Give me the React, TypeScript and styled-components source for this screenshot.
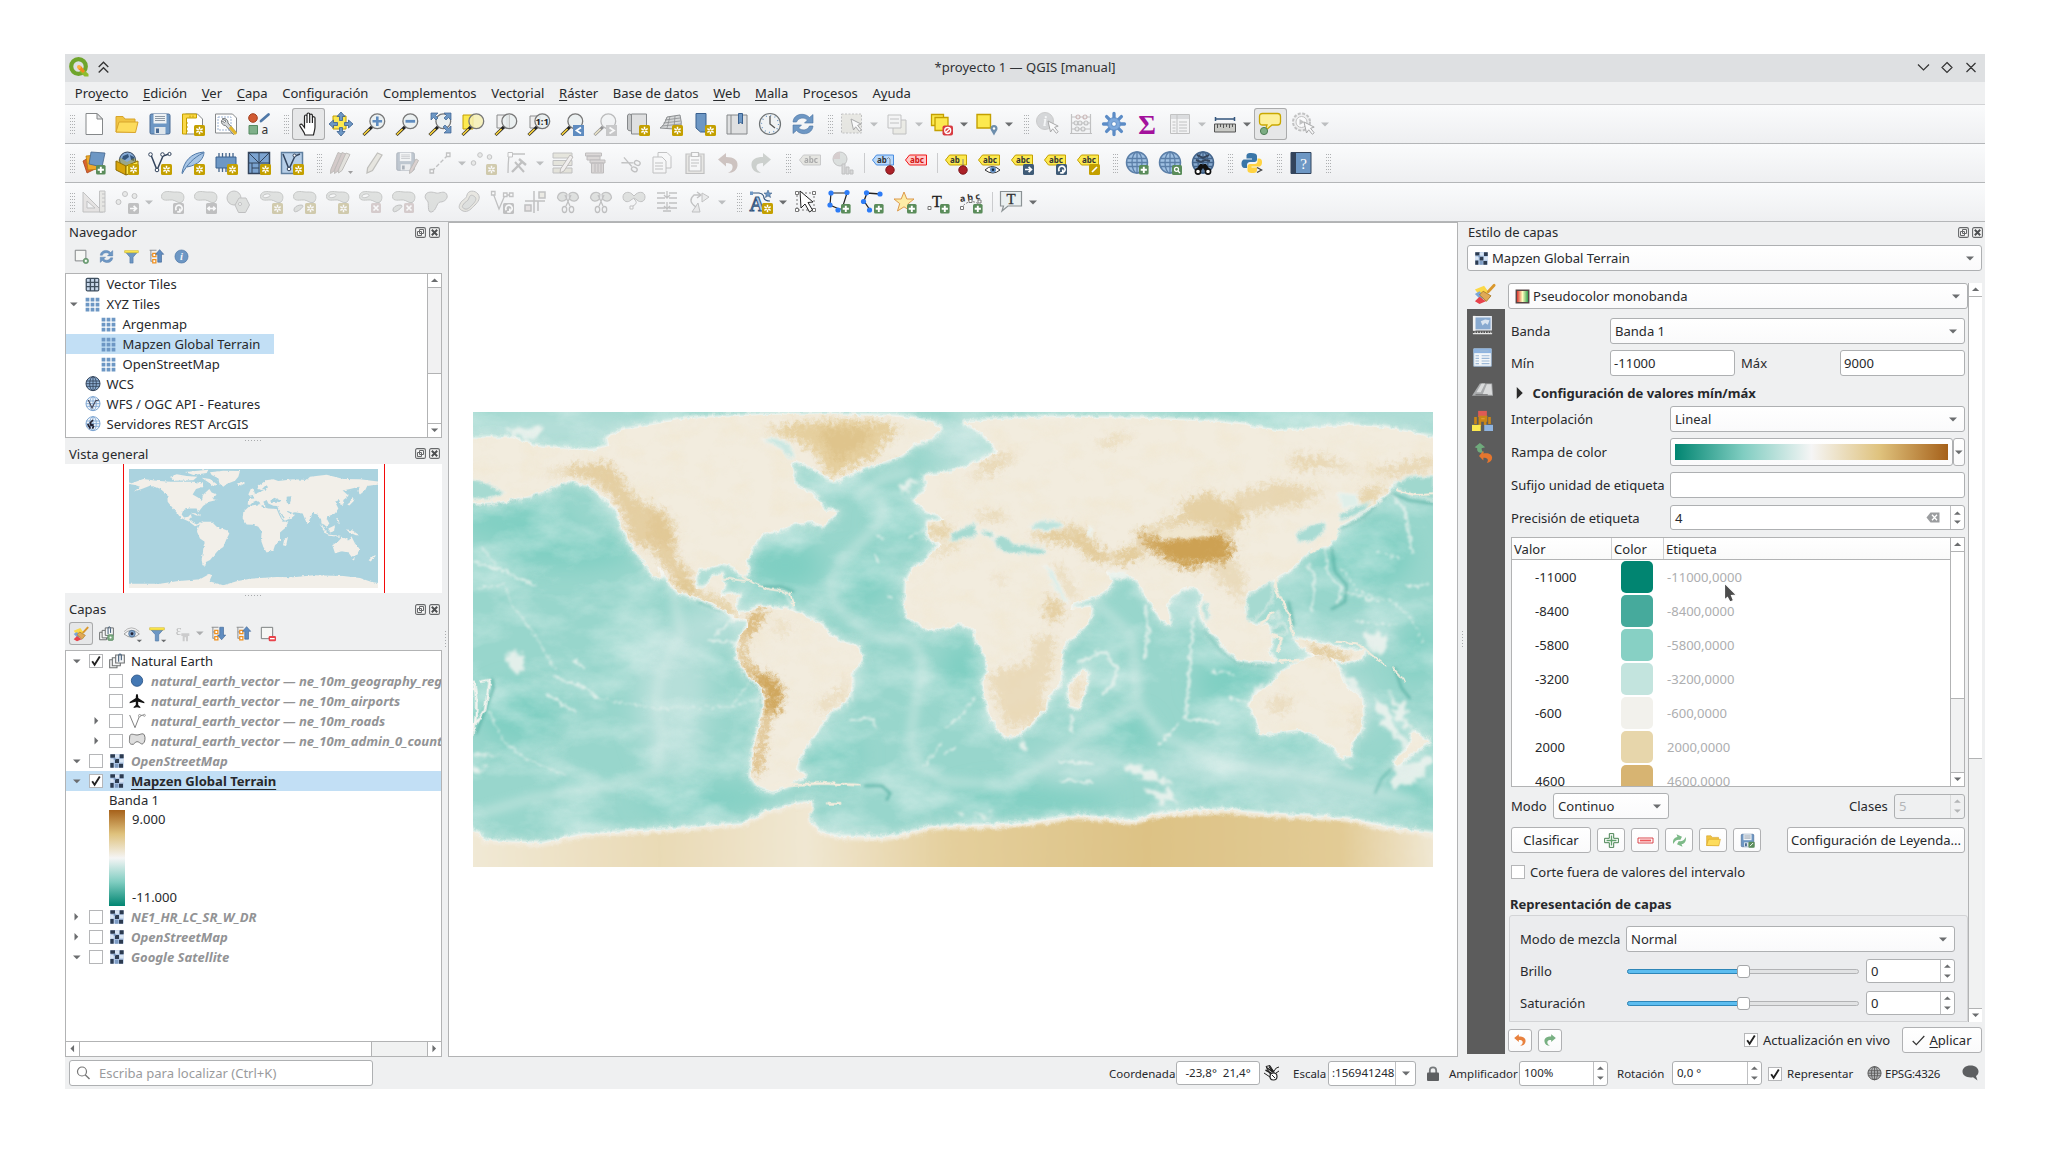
import React from "react";
import styled, { createGlobalStyle, css } from "styled-components";

const LINE = "#b2b3b4";
const RAMP = "#018571, #80cdc1 25%, #f5f5f5 50%, #dfc27d 75%, #a6611a";

const GlobalStyle = createGlobalStyle`
  body {
    margin: 0;
    background: #fff;
    font-family: "Noto Sans", "Open Sans", sans-serif;
    font-size: 13.05px;
    line-height: 20px;
    color: #27292c;
  }
  * { box-sizing: border-box; }
  svg { display: block; flex: none; overflow: visible; }
  u { text-underline-offset: 2px; text-decoration-thickness: 1px; text-decoration-skip-ink: none; }
`;

/* ------------------------------------------------------------------ window */

const Window = styled.div`
  margin: 54px 0 77px 65px;
  width: 1920px;
  height: 1035px;
  background: #eff0f1;
  display: flex;
  flex-direction: column;
  white-space: nowrap;
`;

const TitleBar = styled.div`
  height: 28px;
  background: #dee0e2;
  display: grid;
  grid-template-columns: 200px 1fr 200px;
  align-items: center;
`;
const TitleSide = styled.div<{ $end?: boolean }>`
  display: flex;
  align-items: center;
  gap: 9px;
  padding: ${(p) => (p.$end ? "0 6px 2px 0" : "0 0 2px 4px")};
  justify-content: ${(p) => (p.$end ? "flex-end" : "flex-start")};
`;
const TitleText = styled.div`
  text-align: center;
  padding-bottom: 3px;
  color: #2f3235;
`;

const MenuBar = styled.div`
  height: 23px;
  display: flex;
  padding: 1px 0 0 2.5px;
  border-bottom: 1px solid #d2d3d5;
`;
const MenuItem = styled.span`
  padding: 0 7.3px;
`;

const Bar = styled.div<{ $h: number }>`
  height: ${(p) => p.$h}px;
  display: flex;
  align-items: center;
  background: linear-gradient(#fafbfc, #eeeff1);
  border-bottom: 1px solid #b4b6b8;
`;
const Tool = styled.div<{ $on?: boolean; $off?: boolean }>`
  width: 33px;
  height: 32px;
  display: flex;
  align-items: center;
  justify-content: center;
  ${(p) =>
    p.$on &&
    css`
      background: #e6e7e8;
      box-shadow: inset 0 0 0 1px #aaabac;
      border-radius: 3px;
    `}
  ${(p) => p.$off && css`opacity: 0.47; filter: grayscale(0.6);`}
`;
const DropSlot = styled.div<{ $off?: boolean }>`
  width: 12px;
  padding-right: 1px;
  display: flex;
  justify-content: center;
  opacity: ${(p) => (p.$off ? 0.4 : 1)};
`;
const Grip = styled.div<{ $first?: boolean }>`
  width: ${(p) => (p.$first ? 12.5 : 16)}px;
  height: 19px;
  padding-left: ${(p) => (p.$first ? 5 : 8.5)}px;
  &::before {
    content: "";
    display: block;
    width: 5px;
    height: 19px;
    background-image: radial-gradient(circle at 0.5px 0.5px, #aeb0b2 0.7px, transparent 0.8px);
    background-size: 2px 3px;
  }
`;
const Sep = styled.div`
  width: 7px;
  height: 20px;
  padding-left: 4px;
  &::before {
    content: "";
    display: block;
    width: 1px;
    height: 20px;
    background: #cbccce;
  }
`;

const Main = styled.div`
  height: 835px;
  display: grid;
  grid-template-columns: 377px 6px 1010px 8px 519px;
`;
const Splitter = styled.div<{ $h?: boolean }>`
  display: flex;
  align-items: center;
  justify-content: center;
  ${(p) => (p.$h ? css`height: 6px; padding-bottom: 2px;` : css`padding-bottom: 0;`)}
  &::before {
    content: "";
    width: ${(p) => (p.$h ? 17 : 1)}px;
    height: ${(p) => (p.$h ? 1 : 17)}px;
    background: repeating-linear-gradient(
      ${(p) => (p.$h ? "90deg" : "180deg")},
      #a9abad 0 1px,
      transparent 1px 3px
    );
  }
`;
const Dock = styled.div`
  display: flex;
  flex-direction: column;
  min-width: 0;
`;
const DockTitle = styled.div<{ $h: number; $left?: number }>`
  height: ${(p) => p.$h}px;
  padding: 0 2px 1px ${(p) => p.$left ?? 4}px;
  display: flex;
  align-items: center;
  gap: 3px;
  flex: none;
`;
const Grow = styled.div<{ $white?: boolean }>`
  flex: 1;
  ${(p) => p.$white && css`background: #fff;`}
`;
const DockTools = styled.div<{ $h: number }>`
  height: ${(p) => p.$h}px;
  display: flex;
  align-items: center;
  padding: 0 0 3px 4px;
  flex: none;
`;
const MiniTool = styled.div<{ $w?: number; $on?: boolean; $off?: boolean }>`
  width: ${(p) => p.$w ?? 25}px;
  height: 23px;
  display: flex;
  align-items: center;
  justify-content: center;
  opacity: ${(p) => (p.$off ? 0.5 : 1)};
  ${(p) =>
    p.$on &&
    css`
      background: #e6e7e8;
      box-shadow: inset 0 0 0 1px #a9aaab;
      border-radius: 3px;
    `}
`;
const TreeBox = styled.div<{ $h: number }>`
  height: ${(p) => p.$h}px;
  border: 1px solid ${LINE};
  background: #fff;
  display: flex;
  overflow: hidden;
`;
const TreeList = styled.div`
  flex: 1;
  min-width: 0;
  overflow: hidden;
`;
const NavRow = styled.div<{ $depth: number; $sel?: boolean }>`
  height: 20px;
  display: flex;
  align-items: center;
  padding-left: ${(p) => p.$depth * 16}px;
  width: ${(p) => (p.$sel ? "208px" : "auto")};
  background: ${(p) => (p.$sel ? "#c2dff5" : "transparent")};
`;
const Expander = styled.div<{ $w: number }>`
  width: ${(p) => p.$w}px;
  padding-right: 2px;
  display: flex;
  justify-content: center;
  flex: none;
`;
const NavIcon = styled.div`
  width: 16px;
  margin: 0 5.5px 0 2px;
  flex: none;
`;
const LayerRow = styled.div<{ $depth: number; $sel?: boolean }>`
  height: 20px;
  display: flex;
  align-items: center;
  padding-left: ${(p) => p.$depth * 20}px;
  background: ${(p) => (p.$sel ? "#c2dff5" : "transparent")};
`;
const LayerIcon = styled.div`
  width: 16px;
  margin: 0 6px 0 6px;
  flex: none;
`;
const LayerName = styled.span<{ $kind: "on" | "off" | "current" }>`
  ${(p) => p.$kind === "off" && css`color: #929395; font-weight: 700; font-style: italic;`}
  ${(p) =>
    p.$kind === "current" &&
    css`font-weight: 700; text-decoration: underline; text-underline-offset: 3px;
        text-decoration-thickness: 1px; text-decoration-skip-ink: none;`}
`;
const CheckBox = styled.span`
  width: 14px;
  height: 14px;
  border: 1px solid #b5b6b8;
  background: #fff;
  display: inline-flex;
  align-items: center;
  justify-content: center;
  flex: none;
`;
const BandLabel = styled.div`
  height: 19px;
  line-height: 19px;
  padding-left: 43px;
`;
const Legend = styled.div`
  display: flex;
  height: 97px;
  padding-left: 43px;
`;
const LegendRamp = styled.div`
  width: 16px;
  height: 96px;
  background: linear-gradient(0deg, ${RAMP});
`;
const LegendText = styled.div`
  display: flex;
  flex-direction: column;
  justify-content: space-between;
  padding: 0 0 0 7px;
  height: 96px;
  line-height: 18px;
`;

const ScrollV = styled.div`
  width: 14px;
  border-left: 1px solid ${LINE};
  background: #f1f2f2;
  display: flex;
  flex-direction: column;
  flex: none;
`;
const ScrollBtn = styled.div<{ $side: "t" | "b" | "l" | "r" }>`
  flex: none;
  width: ${(p) => (p.$side === "l" || p.$side === "r" ? "14px" : "auto")};
  height: ${(p) => (p.$side === "t" || p.$side === "b" ? "14px" : "auto")};
  background: #fff;
  display: flex;
  align-items: center;
  justify-content: center;
  ${(p) => p.$side === "t" && css`border-bottom: 1px solid ${LINE};`}
  ${(p) => p.$side === "b" && css`border-top: 1px solid ${LINE};`}
  ${(p) => p.$side === "l" && css`border-right: 1px solid ${LINE};`}
  ${(p) => p.$side === "r" && css`border-left: 1px solid ${LINE};`}
`;
const Slider = styled.div<{ $len: number; $h?: boolean; $bg?: string }>`
  flex: none;
  ${(p) =>
    p.$h
      ? css`width: ${p.$len}px; border-right: 1px solid ${LINE};`
      : css`height: ${p.$len}px; border-bottom: 1px solid ${LINE};`}
  background: ${(p) => p.$bg ?? "#fff"};
`;
const ScrollH = styled.div`
  height: 15px;
  border-top: 1px solid ${LINE};
  background: #f1f2f2;
  display: flex;
`;
const Column = styled.div`
  display: flex;
  flex-direction: column;
  flex: 1;
  min-width: 0;
`;

const Overview = styled.div`
  height: 129px;
  background: #fff;
  display: flex;
  align-items: center;
  padding-left: 58px;
  flex: none;
`;
const ExtentBox = styled.div`
  width: 262px;
  height: 129px;
  border: solid #f20a0a;
  border-width: 0 1px;
  display: flex;
  align-items: center;
  padding-left: 5px;
  svg { overflow: hidden; }
`;

const Canvas = styled.div`
  border: 1px solid ${LINE};
  background: #fff;
  padding: 189px 0 0 24px;
  svg { overflow: hidden; }
`;

/* -------------------------------------------------------------- form parts */

const Field = styled.div<{ $w?: number; $h?: number; $off?: boolean; $small?: boolean; $flat?: boolean }>`
  ${(p) => (p.$w ? css`width: ${p.$w}px; flex: none;` : css`flex: 1;`)}
  height: ${(p) => p.$h ?? 26}px;
  border: 1px solid #aeb0b2;
  border-radius: 3px;
  background: ${(p) => (p.$off ? "#eff0f1" : p.$flat ? "#fff" : "linear-gradient(#ffffff,#fafafb)")};
  color: ${(p) => (p.$off ? "#b4b6b8" : "inherit")};
  font-size: ${(p) => (p.$small ? 11.500 : 13.05)}px;
  display: flex;
  align-items: center;
  padding-left: 3px;
  overflow: hidden;
`;
const FieldIcon = styled.span`
  padding: 0 0 0 3px;
`;
const FieldText = styled.span<{ $pad?: number; $center?: boolean }>`
  flex: 1;
  padding-left: ${(p) => p.$pad ?? 0}px;
  ${(p) => p.$center && css`text-align: center; padding-right: 3px; white-space: pre;`}
`;
const ArrowPad = styled.div<{ $w?: number }>`
  width: ${(p) => p.$w ?? 22}px;
  display: flex;
  justify-content: center;
`;
const SpinBtns = styled.div<{ $off?: boolean }>`
  width: 14px;
  align-self: stretch;
  border-left: 1px solid #bfc0c2;
  display: flex;
  flex-direction: column;
  align-items: center;
  justify-content: center;
  gap: 5px;
  opacity: ${(p) => (p.$off ? 0.45 : 1)};
`;
const FormRow = styled.div<{ $mt: number; $h: number; $pad?: number }>`
  margin-top: ${(p) => p.$mt}px;
  height: ${(p) => p.$h}px;
  padding: 0 ${(p) => p.$pad ?? 3}px;
  display: flex;
  align-items: center;
  flex: none;
`;
const Label = styled.span<{ $w?: number; $ml?: number }>`
  ${(p) => p.$w !== undefined && css`width: ${p.$w}px; flex: none;`}
  margin-left: ${(p) => p.$ml ?? 0}px;
`;
const Bold = styled.span<{ $ml?: number }>`
  font-weight: 700;
  margin-left: ${(p) => p.$ml ?? 0}px;
`;
const PushButton = styled.div<{ $w: number; $h?: number; $ml?: number }>`
  width: ${(p) => p.$w}px;
  height: ${(p) => p.$h ?? 26}px;
  margin-left: ${(p) => p.$ml ?? 0}px;
  flex: none;
  border: 1px solid #b0b1b3;
  border-radius: 3px;
  background: linear-gradient(#fff, #fafafb);
  display: flex;
  align-items: center;
  justify-content: center;
  gap: 4px;
`;
const StyleHead = styled.div`
  padding: 2px 3px 0 1px;
  display: flex;
`;
const StyleBody = styled.div`
  margin: 8px 0 0 1px;
  display: grid;
  grid-template-columns: 38px 1fr;
  height: 778px;
`;
const TabColumn = styled.div`
  display: flex;
  flex-direction: column;
  height: 775px;
`;
const ActiveTab = styled.div`
  height: 30px;
  display: flex;
  align-items: center;
  justify-content: center;
  padding: 0 3px 0 0;
`;
const DarkTabs = styled.div`
  flex: 1;
  background: #5c5c5c;
  display: flex;
  flex-direction: column;
  padding-top: 1px;
`;
const DarkTab = styled.div`
  height: 31.7px;
  display: flex;
  align-items: center;
  justify-content: center;
  padding-right: 8px;
`;
const StyleContent = styled.div`
  padding: 4px 0 0 3px;
  display: flex;
  flex-direction: column;
`;
const ScrollArea = styled.div`
  height: 739px;
  display: flex;
  overflow: hidden;
`;
const FormColumn = styled.div`
  width: 460px;
  height: 739px;
  overflow: hidden;
  display: flex;
  flex-direction: column;
`;
const RampBar = styled.div`
  flex: 1;
  height: 16px;
  margin: 0 4px 0 1px;
  background: linear-gradient(90deg, ${RAMP});
`;

const ClassTable = styled.div`
  margin: 7px 3px 0;
  height: 250px;
  border: 1px solid ${LINE};
  background: #fff;
  display: flex;
  overflow: hidden;
  flex: none;
  position: relative;
`;
const TableHead = styled.div`
  height: 22px;
  display: grid;
  grid-template-columns: 100px 52px 1fr;
  border-bottom: 1px solid ${LINE};
  background: linear-gradient(#fff, #fafafa);
  flex: none;
`;
const HeadCell = styled.div<{ $last?: boolean }>`
  padding: 1px 0 0 2px;
  border-right: ${(p) => (p.$last ? "none" : "1px solid #d0d1d3")};
`;
const ClassRow = styled.div`
  height: 34px;
  display: grid;
  grid-template-columns: 109px 46px 1fr;
  align-items: center;
  flex: none;
`;
const ClassValue = styled.div`
  padding-left: 23px;
`;
const Swatch = styled.div<{ $c: string }>`
  width: 32px;
  height: 32px;
  border-radius: 5px;
  background: ${(p) => p.$c};
`;
const ClassLabel = styled.div`
  color: #adaeb0;
`;
const Pointer = styled.div`
  position: absolute;
  left: 211px;
  top: 44px;
`;
const Group = styled.div`
  margin: 0 0 0 1px;
  border: 1px solid #d3d4d6;
  border-radius: 3px 3px 0 0;
  background: #ebecee;
  padding: 10px 12px 0 10px;
  flex: 1;
`;
const Track = styled.div`
  width: 232px;
  height: 5px;
  border-radius: 3px;
  border: 1px solid #b2b3b5;
  background: #e2e3e4;
  display: flex;
  align-items: center;
`;
const TrackFill = styled.div`
  width: 111px;
  height: 5px;
  margin-left: -1px;
  border: 1px solid #2e86b8;
  border-radius: 3px 0 0 3px;
  background: #5cbdf0;
  flex: none;
`;
const Knob = styled.div`
  width: 13px;
  height: 13px;
  margin-left: -1px;
  border: 1px solid #a4a6a8;
  border-radius: 3px;
  background: #fff;
  flex: none;
`;
const ApplyRow = styled.div`
  height: 35px;
  padding: 1px 3px 0 0;
  display: flex;
  align-items: center;
`;

const StatusBar = styled.div`
  height: 32px;
  display: grid;
  align-items: center;
  padding-left: 4px;
  grid-template-columns: 304px 1fr 67px 84px 33px 35px 88px 33px 70px 89px 64px 90px 104px 94px 25px;
  font-size: 11.5px;
`;
const StatusLabel = styled.div<{ $pl?: number; $tight?: boolean }>`
  padding-left: ${(p) => p.$pl ?? 0}px;
  padding-top: 1px;
  display: flex;
  align-items: center;
  gap: ${(p) => (p.$tight ? 3 : 5)}px;
  letter-spacing: ${(p) => (p.$tight ? "-0.25px" : "normal")};
`;
const StatusIcon = styled.div<{ $pr?: number }>`
  display: flex;
  justify-content: center;
  padding-right: ${(p) => p.$pr ?? 0}px;
`;
const Muted = styled.span`
  color: #9a9b9d;
  font-size: 13.05px;
  padding-left: 6px;
`;
const ScaleSep = styled.div`
  align-self: stretch;
  width: 20px;
  border-left: 1px solid #bfc0c2;
  display: flex;
  align-items: center;
  justify-content: center;
`;

/* ------------------------------------------------------------------- icons */

type TriDir = "up" | "down" | "left" | "right";
const TRI: Record<TriDir, [number, number, string]> = {
  down: [8, 5, "M0 0.5h8L4 4.5z"],
  up: [8, 5, "M0 4.5h8L4 0.5z"],
  left: [5, 8, "M4.5 0v8L0.5 4z"],
  right: [5, 8, "M0.5 0v8l4-4z"],
};
const Tri = ({ d = "down", s = 1, c = "#6b6d6f" }: { d?: TriDir; s?: number; c?: string }) => {
  const [w, h, p] = TRI[d];
  return (
    <svg width={w * s} height={h * s} viewBox={`0 0 ${w} ${h}`}>
      <path d={p} fill={c} />
    </svg>
  );
};
const Tick = () => (
  <svg width="12" height="12" viewBox="0 0 12 12">
    <path d="M2.2 6.3l2.4 3.4L9.8 1.6" fill="none" stroke="#222" strokeWidth="1.9" />
  </svg>
);
const Check = ({ on }: { on?: boolean }) => <CheckBox>{on && <Tick />}</CheckBox>;

const NewBadge = () => (
  <g>
    <rect x="13" y="13" width="11" height="11" rx="1.5" fill="#c4a000" stroke="none" />
    <path d="M18.5 14.8v7.4M15.3 16.6l6.4 3.8M21.7 16.6l-6.4 3.8" stroke="#fff" strokeWidth="1.5" />
    <circle cx="18.5" cy="18.5" r="1.1" fill="#c4a000" stroke="none" />
  </g>
);
const PlusBadge = () => (
  <g>
    <rect x="14" y="14" width="9.6" height="9.6" rx="1.5" fill="#5a8c5a" stroke="none" />
    <path d="M18.8 15.7v6.2M15.7 18.8h6.2" stroke="#fff" strokeWidth="1.9" />
  </g>
);
const XBadge = () => (
  <g>
    <rect x="13" y="13" width="10" height="10" rx="1.5" fill="#d09a9a" stroke="none" />
    <path d="M15.5 15.5l5 5M20.5 15.5l-5 5" stroke="#fff" strokeWidth="1.7" />
  </g>
);
const GlyphBadge = ({ p, c = "#3f5b77" }: { p: string; c?: string }) => (
  <g>
    <rect x="13" y="13" width="11" height="11" rx="1.5" fill={c} stroke="none" />
    <path d={p} stroke="#fff" strokeWidth="1.7" fill="none" />
  </g>
);
const ARROW_R = "M15 18.5h6M18.6 15.8l2.8 2.7-2.8 2.7";
const ROTATE = "M16.3 20.2a3.2 3.2 0 1 1 3.4 1.3M19.8 18.6v3.2h-2.6";
const SWAP = "M15 18.5h7M16.8 16.6l-1.9 1.9 1.9 1.9M20.2 16.6l1.9 1.9-1.9 1.9";

const Lens = ({ fill = "#e9eef0" }: { fill?: string }) => (
  <g>
    <path d="M10.2 14.6L1.5 23" stroke="#222" strokeWidth="3" />
    <path d="M7.6 17L1.8 22.6" stroke="#f7d13c" strokeWidth="1.7" />
    <circle cx="15.3" cy="9.3" r="7.4" fill={fill} fillOpacity=".85" stroke="#777" strokeWidth="1.3" />
  </g>
);
const Blob = ({ hole }: { hole?: boolean }) => (
  <g fill="#c3cac0" stroke="#8c938a">
    <path d="M1.500 6.500C1.500 1.500 7 1 11 1.800S20 1 22.500 3.500s1.500 8-1.500 9-5-2-8.500-2.500S1.500 12 1.500 6.500z" />
    {hole && <path d="M4 6.500c0-2.500 6-3.500 7-1.500s-6.500 4-7 1.500z" fill="#f4f5f6" />}
  </g>
);
const Scissors = ({ leaf = true }: { leaf?: boolean }) => (
  <g fill="none" stroke="#888" strokeWidth="1.3">
    {leaf && <path d="M1.500 8C2 2 8 1 11 4M22.500 8C22 2 16 1 13 4M1.500 8c2 4 6 4 9 1L11 4M22.500 8c-2 4-6 4-9 1L13 4" fill="#c3cac0" />}
    <path d="M9 5l5 11M15 5l-5 11" />
    <ellipse cx="8.500" cy="19.500" rx="2.200" ry="3" />
    <ellipse cx="15.500" cy="19.500" rx="2.200" ry="3" />
  </g>
);
const Refresh = () => (
  <g fill="#6d97c4" stroke="#4c74a3" strokeWidth=".6">
    <path d="M2 10C2.500 4 8 1.500 13 2.500c2.500.5 4 1.500 5.500 3L22 2.500V11h-8.500l3-3C13 5 7.500 5.500 5.500 10z" />
    <path d="M22 14c-.5 6-6 8.500-11 7.500-2.500-.5-4-1.500-5.500-3L2 21.500V13h8.500l-3 3c3.500 3 9 2.500 11-2z" />
  </g>
);
const Globe = ({ c = "#5b7fa8", bg = "#9fc0e2" }: { c?: string; bg?: string }) => (
  <g fill="none" stroke={c} strokeWidth="1.300">
    <circle cx="12" cy="11.500" r="10.500" fill={bg} strokeWidth="1.500" />
    <ellipse cx="12" cy="11.500" rx="5" ry="10.500" />
    <path d="M12 1v21M2 7.500h20M1.500 11.500h21M2 15.500h20" />
  </g>
);
const Tag = ({ fill, stroke, txt, t }: { fill: string; stroke: string; txt: string; t: string }) => (
  <g>
    <path d="M1.500 9l4-5h17v10h-17z" fill={fill} stroke={stroke} />
    <text x="6" y="12" fontSize="8" fontWeight="700" fill={txt} fontFamily="Noto Sans, sans-serif">
      {t}
    </text>
  </g>
);
const Cursor = ({ x = 12, y = 10 }: { x?: number; y?: number }) => (
  <path d={`M${x} ${y}l2.500 11 2.200-3.200 3.600 4.500 1.900-1.500-3.600-4.500 3.600-1.200z`} fill="#fff" stroke="#555" />
);
const Checker = () => (
  <g>
    <path d="M2 2h20v20H2z" fill="#b3cae9" />
    <path d="M2 2h7v5H2zM16 2h6v6h-6zM9 9h6v6H9zM15 16h6v6h-6zM2 15h5v7H2z" fill="#2c3b50" />
    <path d="M9 3h6v4H9zM2 9h5v5H2zM16 9h6v5h-6z" fill="#d8e5f4" />
    <path d="M9 16h5v6H9zM7 7h3v3H7z" fill="#7f9dc4" />
  </g>
);
const Tiles = ({ dark }: { dark?: boolean }) =>
  dark ? (
    <g>
      <rect x="1" y="1" width="22" height="22" rx="3" fill="#3f4f5f" />
      <path d="M3 3h4.500v4.500H3zM9.700 3h4.600v4.500H9.700zM16.500 3H21v4.500h-4.500zM3 9.700h4.500v4.600H3zM9.700 9.700h4.600v4.600H9.700zM16.500 9.700H21v4.600h-4.500zM3 16.500h4.500V21H3zM9.700 16.500h4.600V21H9.700zM16.500 16.500H21V21h-4.500z" fill="#c6d6ea" />
    </g>
  ) : (
    <path d="M1 1h6v6H1zM9 1h6v6H9zM17 1h6v6h-6zM1 9h6v6H1zM9 9h6v6H9zM17 9h6v6h-6zM1 17h6v6H1zM9 17h6v6H9zM17 17h6v6h-6z" fill="#6d97c4" />
  );
const Brush = () => (
  <g>
    <path d="M1 7l10-4 5 7-8 6z" fill="#fbd847" />
    <path d="M1 12l5-3 6 7-5 2z" fill="#7aa5d8" />
    <path d="M1 20l5-5 7 5-7 3z" fill="#e8434b" />
    <path d="M22 2.500l-6.500 7" stroke="#d9972c" strokeWidth="3" strokeLinecap="round" />
    <path d="M10 9l8.500 5-5 6-7.500-7z" fill="#e0a956" stroke="#a87a2b" />
  </g>
);
const Folder = () => (
  <g stroke="#d8a52c" strokeLinejoin="round">
    <path d="M1 20V4.500h7l2 2.500h10v13z" fill="#f0c443" />
    <path d="M1 20L4 10h19l-2.500 10.500z" fill="#fddc5c" />
  </g>
);
const Floppy = () => (
  <g>
    <path d="M2 3.500Q2 2 3.500 2h17Q22 2 22 3.500v17Q22 22 20.500 22h-17Q2 22 2 20.500z" fill="#6d97c4" stroke="#486a94" />
    <path d="M5.500 2h13v9.500h-13z" fill="#eef2f5" />
    <path d="M7 4.500h10M7 6.500h10M7 8.500h10" stroke="#8d99a5" />
    <path d="M6.500 15h11v7h-11z" fill="#dfe6ec" />
    <path d="M8 16.500h3V21H8z" fill="#486a94" />
  </g>
);
const Info = ({ pale }: { pale?: boolean }) => (
  <g>
    <circle cx={pale ? 9 : 12} cy={pale ? 9 : 12} r={pale ? 8.500 : 10.500} fill={pale ? "#aeb4ba" : "#6d97c4"} stroke={pale ? "#999" : "#4c74a3"} />
    <text x={pale ? 9 : 12} y={pale ? 14 : 18} fontSize={pale ? 14 : 17} fontStyle="italic" fontWeight="700" textAnchor="middle" fill="#f3f6fa" fontFamily="Liberation Serif, serif">
      i
    </text>
  </g>
);
const UndoShape = ({ c, flip }: { c: string; flip?: boolean }) => (
  <path
    transform={flip ? "translate(24 0) scale(-1 1)" : undefined}
    d="M2 8.500L10 2v4c8 0 12 3 11.500 8.500C21 19 17.500 22 12 22c3.500-2 5-4 4.500-7-.5-2.300-3-3-6.500-3v3.500z"
    fill={c}
  />
);
const FilterShape = () => (
  <g>
    <path d="M1.500 4h21L14.500 13v9.500h-5V13z" fill="#6d97c4" stroke="#5079a8" />
    <path d="M1 2.500h22v3.500H1z" fill="#fce94f" stroke="#c4a000" strokeWidth=".6" />
  </g>
);
const TreeArrow = ({ up }: { up?: boolean }) => (
  <g>
    <path d="M1 2h11M3 2v18M3 9.500h3M3 19.500h3" stroke="#8b8c8d" strokeWidth="1.500" fill="none" />
    <path d="M6 7h5v5H6zM6 17h5v5H6z" fill="#fff" stroke="#f0901e" strokeWidth="2" />
    <path d={up ? "M17 1l6.500 7.500h-3.500V21h-6V8.500h-3.500z" : "M17 22l6.500-7.500h-3.500V2h-6v12.500h-3.500z"} fill="#5f8cc0" stroke="#3e6595" />
  </g>
);
const GroupShape = () => (
  <g fill="#f5f6f7" stroke="#6e7172" strokeWidth="1.600">
    <path d="M1 10h11v12H1z" />
    <path d="M5 7h12v12H5z" />
    <path d="M10 3h13v12H10z" />
    <path d="M14.500 13V4c0-3.500 4-3.500 4 0v7" fill="none" stroke="#3f5b77" />
  </g>
);

const ICONS: Record<string, React.ReactNode> = {
  page: <g stroke="#85888a" fill="#fff"><path d="M4 1.500h11l5.500 5.500v15.500H4z" /><path d="M15 1.500V7h5.500z" fill="#e3e4e5" /></g>,
  folder: <Folder />,
  save: <Floppy />,
  layout: <g><path d="M4.500 2h12l5 5v15h-17z" fill="#fff" stroke="#85888a" /><path d="M1.500 2h14v4h-10v16h-4z" fill="#fbd847" stroke="#c4a000" /><path d="M5 11h2M5 15h2M5 19h2M9 3.500v2M12 3.500v2" stroke="#c4a000" /><NewBadge /></g>,
  layoutmgr: <g><path d="M1.500 2h17l4 4v15h-21z" fill="#fff" stroke="#85888a" /><path d="M4 5h13v13H4z" fill="none" stroke="#9db4d4" strokeDasharray="2 1" /><path d="M8 7a4 4 0 0 1 6 4l8 9-2.500 2.500-8-9a4 4 0 0 1-4-5l3 2 1.500-1.500z" fill="#d5d8da" stroke="#75797b" /><path d="M16 15l6 7" stroke="#e4b72b" strokeWidth="3" /></g>,
  style: <g><circle cx="6" cy="6" r="4.300" fill="#d25b33" stroke="#a3401f" /><path d="M21.500 2.500L14 9" stroke="#5079a8" strokeWidth="2.800" strokeLinecap="round" /><path d="M2 13.500h8.500V22H2z" fill="#7fb08a" stroke="#548a61" /><text x="14.500" y="22" fontSize="12" fill="#333" fontFamily="Noto Sans, sans-serif">a</text></g>,
  hand: <path d="M8 23c-.5-3-3.500-6-5-9-.8-1.800 1.500-2.500 2.500-1l2 2.500V4.500c0-2 2.500-2 2.500 0V2.500c0-2 2.700-2 2.700 0V3.500c0-2 2.700-1.800 2.700 0V6c0-1.800 2.600-1.600 2.600 0v9c0 3-1 5-1.500 8zM10 4.500V11M12.700 3.500V11M15.400 5v6" fill="#fff" stroke="#222" strokeWidth="1.200" transform="translate(1 0)" />,
  panall: <g><path d="M4 4h13v13H4z" fill="#fce94f" stroke="#c4a000" /><path d="M12 0l4 4.500h-2.500v4h-3v-4H8zM12 24l4-4.500h-2.500v-4h-3v4H8zM0 12l4.500-4v2.500h4v3h-4V16zM24 12l-4.500-4v2.500h-4v3h4V16z" fill="#6d97c4" stroke="#39608f" strokeWidth=".8" /></g>,
  zoomin: <g><Lens /><path d="M15.300 4.500v9.600M10.500 9.300h9.600" stroke="#5f8cc0" strokeWidth="2.600" /></g>,
  zoomout: <g><Lens /><path d="M10.500 9.300h9.600" stroke="#5f8cc0" strokeWidth="2.800" /></g>,
  zoomfull: <g><Lens /><path d="M3 1h7L7.500 3.500 10 6 8 8 5.500 5.500 3 8zM23 1v7l-2.500-2.500L18 8l-2-2 2.500-2.500L16 1zM23 21h-7l2.500-2.500L15 15l2-2 3.500 3.500L23 14z" fill="#6d97c4" stroke="#39608f" strokeWidth=".7" /></g>,
  zoomsel: <g><path d="M2 3h10v14H2z" fill="#fce94f" stroke="#c4a000" /><Lens fill="#f6f0b4" /></g>,
  zoomlayer: <g><path d="M3 3h10v13H3z" fill="#f0f0f0" stroke="#8b8c8d" /><Lens /><path d="M15.300 2.500v13.500" stroke="#bbb" /></g>,
  zoomnative: <g><path d="M3 4h10v12H3z" fill="#eee" stroke="#8b8c8d" /><Lens /><text x="15.200" y="13" fontSize="9.500" fontWeight="700" textAnchor="middle" fill="#222" fontFamily="Noto Sans, sans-serif">1:1</text></g>,
  zoomlast: <g><Lens /><rect x="13" y="13" width="11" height="11" fill="#5f8cc0" /><path d="M21 15.500l-4.500 3 4.500 3" stroke="#fff" strokeWidth="1.800" fill="none" /></g>,
  zoomnext: <g><Lens /><rect x="13" y="13" width="11" height="11" fill="#999" /><path d="M16.500 15.500l4.500 3-4.500 3" stroke="#fff" strokeWidth="1.800" fill="none" /></g>,
  mapview: <g><path d="M5.500 2h15v20h-15z" fill="#dfe0e1" stroke="#85888a" /><path d="M1.500 4q0-2 2-2t2 2v15q-4 0-4-2z" fill="#c6c8c9" stroke="#85888a" /><NewBadge /></g>,
  map3d: <g><path d="M1 16Q5 14 8 5l13-2q2 8 1 12l-7 2z" fill="#d6d8d9" stroke="#8b8e90" /><path d="M4.500 11l17-2M11 4.500L8 16M16 4l-1 12M6 8l15-2M3 14l19-2" stroke="#8b8e90" strokeWidth=".8" fill="none" /><NewBadge /></g>,
  bookmark: <g><path d="M4 1.500h10V20H8.500L4 16z" fill="#6d97c4" stroke="#39608f" /><NewBadge /></g>,
  bookmarks: <g><path d="M2 3h20v19H2z" fill="#dfe0e1" stroke="#85888a" /><path d="M6 3v19" stroke="#85888a" /><path d="M13.500 1.500h4V12l-2-2-2 2z" fill="#6d97c4" stroke="#39608f" /></g>,
  clock: <g><circle cx="12" cy="12" r="10.500" fill="#f1f3f4" stroke="#6f7476" strokeWidth="1.200" /><circle cx="12" cy="12" r="8.500" fill="none" stroke="#6d97c4" strokeDasharray="1 3.450" strokeWidth="1.300" /><path d="M12 4v8l5 4" fill="none" stroke="#555" strokeWidth="1.300" /></g>,
  refresh: <Refresh />,
  select: <g><path d="M1.500 2h20v19h-20z" fill="#dad8bd" stroke="#888" strokeDasharray="2 1.500" /><Cursor x={11} y={7} /></g>,
  selectval: <g><path d="M8 8h13v14H8z" fill="#e5e2c2" stroke="#888" /><path d="M3 3h13v13H3z" fill="#f1f2f3" stroke="#888" /><path d="M5 7h9M5 11h9" stroke="#888" /></g>,
  deselect: <g fill="#fce94f" stroke="#c4a000" strokeWidth="1.300"><path d="M1.500 2.500h12v11h-12z" /><path d="M5 5.500h13v13H5z" /><rect x="12.500" y="13.500" width="10.500" height="10" rx="2" fill="#d83a40" stroke="none" /><circle cx="17.700" cy="18.500" r="3" fill="none" stroke="#fff" /><path d="M15.500 20.500l4.500-4" stroke="#fff" /></g>,
  selectloc: <g><path d="M2 2.500h13.500v13.500H2z" fill="#fce94f" stroke="#c4a000" strokeWidth="1.400" /><path d="M19 23.500c-2-4-3.500-5-3.500-7a3.500 3.500 0 0 1 7 0c0 2-1.500 3-3.500 7z" fill="#6d8eac" /><circle cx="19" cy="16.500" r="1.200" fill="#fff" /></g>,
  identify: <g><Info pale /><Cursor x={12} y={9} /></g>,
  abacus: <g fill="none" stroke="#888" strokeWidth="1.200"><path d="M2.500 2v19M21.500 2v19M1 21.500h22M2.500 5h19M2.500 11h19M2.500 17h19" /><g fill="#ddd"><circle cx="9" cy="5" r="2" stroke="#c66" /><circle cx="16" cy="5" r="2" stroke="#c66" /><circle cx="7" cy="11" r="2" /><circle cx="11" cy="11" r="2" /><circle cx="17" cy="11" r="2" /><circle cx="8" cy="17" r="2" /><circle cx="14" cy="17" r="2" /></g></g>,
  gear: <g stroke="#5c8cc6" fill="#8fb4e0"><path d="M12 1.500v21M1.500 12h21M4.600 4.600l14.800 14.800M19.400 4.600L4.600 19.400" strokeWidth="3.300" strokeLinecap="round" /><circle cx="12" cy="12" r="6.300" fill="#7ea9dc" /><circle cx="12" cy="12" r="2.400" fill="#fff" /></g>,
  sigma: <text x="12" y="21.500" fontSize="27" fontWeight="700" textAnchor="middle" fill="#a3119c" fontFamily="Liberation Serif, serif">Σ</text>,
  table: <g><path d="M2.500 2.500h19v19h-19z" fill="#f1f2f3" stroke="#888" /><path d="M3 3h18v4H3z" fill="#b9c0c6" /><path d="M9 3v18M4.500 10h3M4.500 13h3M4.500 16h3M4.500 19h3M11 10h8M11 13h8M11 16h8M11 19h8" stroke="#888" /></g>,
  measure: <g><path d="M2.500 7h19M2.500 5v4M21.500 5v4" stroke="#33557c" strokeWidth="1.500" /><path d="M1.500 12h21v8h-21z" fill="#c9cac6" stroke="#555" /><path d="M4.500 12v4M7.500 12v3M10.500 12v4M13.500 12v3M16.500 12v4M19.500 12v3" stroke="#555" /></g>,
  maptips: <g><path d="M4.500 1.500h15q3 0 3 3V10q0 3-3 3H14L7 19l2-6H4.500q-3 0-3-3V4.500q0-3 3-3z" fill="#fdf09a" stroke="#c9a800" strokeWidth="1.300" /><circle cx="6" cy="19" r="3.600" fill="#7cad83" stroke="#4f7f57" /></g>,
  action: <g><circle cx="10.500" cy="10" r="8.500" fill="#e7e7e7" stroke="#888" strokeWidth="2" strokeDasharray="3 1.500" /><circle cx="10.500" cy="10" r="5.500" fill="#fff" stroke="#888" /><path d="M8.500 7l5 3-5 3z" fill="#888" /><Cursor x={13} y={10} /></g>,

  datasource: <g strokeWidth=".8"><path d="M1 10l9-5 5 12-10 5z" fill="#d9642f" stroke="#a8451a" /><path d="M4 5l12-1 2 14-12 1z" fill="#f0a928" stroke="#b97c0c" /><path d="M9 1l14 1-3 14-13-3z" fill="#6d97c4" stroke="#44658c" /><PlusBadge /></g>,
  geopackage: <g><circle cx="12.500" cy="9" r="8" fill="#86abd6" stroke="#33445c" /><path d="M8 5l5-2 1 3-4 3-3-1zM15 4l4 2v4l-3-1z" fill="#33557c" /><path d="M1 10l10 5v9L1 19z" fill="#d9a50b" stroke="#8b6a00" /><path d="M11 15l12-5v9l-12 5z" fill="#fce94f" stroke="#8b6a00" /><path d="M1 10l5-3 6 4 7-4 4 3-12 5z" fill="#c4a000" fillOpacity=".35" /><NewBadge /></g>,
  shapefile: <g><path d="M3 4l6 15L15 5l6-2" fill="none" stroke="#33445c" strokeWidth="1.500" /><circle cx="2.500" cy="3.500" r="1.800" fill="#fff" stroke="#33445c" /><circle cx="9" cy="19" r="1.800" fill="#fff" stroke="#33445c" /><circle cx="14.500" cy="3.500" r="1.800" fill="#fff" stroke="#33445c" /><circle cx="21.500" cy="3" r="1.600" fill="#fff" stroke="#33445c" /><NewBadge /></g>,
  spatialite: <g><path d="M1 22C3 10 10 2 23 1c0 6-5 13-17 15" fill="#a8c6e6" stroke="#5079a8" /><path d="M1 23C6 14 12 7 22 2" stroke="#5079a8" fill="none" /><NewBadge /></g>,
  scratch: <g><path d="M2 6h20v11H2z" fill="#6d97c4" stroke="#39608f" /><path d="M5 2v4M8.500 2v4M12 2v4M15.500 2v4M19 2v4M5 17v4M8.500 17v4M12 17v4M15.500 17v4" stroke="#44658c" strokeWidth="1.300" /><NewBadge /></g>,
  meshnew: <g><path d="M1.500 1.500h21v21h-21z" fill="#7ba3d0" stroke="#33445c" strokeWidth="1.500" /><path d="M1.500 12h21M12 1.500v21M1.500 1.500L12 12 22.500 1.500M5 12v10M5 17h7" stroke="#33445c" fill="none" /><NewBadge /></g>,
  virtual: <g><path d="M1.500 1.500h21v21h-21z" fill="#b7cfe8" stroke="#5f7f9f" strokeWidth="1.500" /><path d="M3 3l6 15 6-13 5-2" fill="none" stroke="#33445c" strokeWidth="1.500" /><circle cx="9" cy="18" r="1.800" fill="#fff" stroke="#33445c" /><circle cx="14.500" cy="4.500" r="1.500" fill="#fff" stroke="#33445c" /><NewBadge /></g>,
  edits: <g stroke="#8a7c6c"><path d="M9 1.500l4 1.500-8 17-3.500 2.500.3-4z" fill="#c9958c" /><path d="M13 1.500l4 1.500-8 17-3.500 2.500.3-4z" fill="#c9958c" /><path d="M17 2l4 1.500-8 16-3.500 2.500.3-4z" fill="#d5ccb0" /><path d="M19 20h5l-2.500 3z" fill="#444" stroke="none" /></g>,
  pencil: <path d="M15.500 2l4.500 2-9.500 15.500L5 22l.6-5z" fill="#ddd5b3" stroke="#8a8470" strokeWidth="1.300" />,
  saveedits: <g><g transform="scale(.88)"><Floppy /></g><path d="M21 8l2.500 1.500-6 11-3 2 .3-3.500z" fill="#d8a59d" stroke="#8a7c6c" /></g>,
  digitize: <g fill="#fff" stroke="#888" strokeWidth="1.300"><path d="M4 20L20 4" strokeDasharray="4 2" /><path d="M2 18.500h3.500V22H2zM18.500 2H22v3.500h-3.500z" /></g>,
  addpoint: <g fill="#d8dbd6" stroke="#888"><circle cx="0.500" cy="12" r="2.300" /><circle cx="7" cy="4" r="2.300" /><circle cx="16.500" cy="6" r="2.300" /><NewBadge /></g>,
  vertex: <g stroke="#888" fill="#ddd"><path d="M2 3h17M3 3Q2 14 2 22" fill="none" strokeWidth="1.300" /><path d="M2 1.500h4.500V6H2z" fill="#fff" /><path d="M6 21L17 10M13 8l7 6" strokeWidth="2.400" /><path d="M9 11l9 10" strokeWidth="2" /></g>,
  attrs: <g><path d="M2 2h19v5H2zM2 9.500h19v5H2zM2 17h19v5H2z" fill="#d9d3a4" stroke="#888" /><path d="M19 4l3 2-9 14-4 2 .5-4z" fill="#f3e7e2" stroke="#8a7c6c" /></g>,
  trash: <g fill="#c9b3b0" stroke="#8a7c7c"><path d="M1.500 2h16v3h-16zM3 5h13v4H3z" /><path d="M6 9h15v3H6zM7.500 12h12v10h-12zM11 13v8M14 13v8M17 13v8" /></g>,
  cut: <g fill="none" stroke="#8a8a8a" strokeWidth="1.600" transform="rotate(-65 12 12)"><Scissors leaf={false} /></g>,
  copy: <g fill="#fafafa" stroke="#888"><path d="M8 1.500h9l4 4V17H8z" /><path d="M3 6h9l4 4v12H3z" /><path d="M5 12h8M5 15h8M5 18h8" /></g>,
  paste: <g fill="#fafafa" stroke="#888" strokeWidth="1.200"><path d="M3 3h18v19.500H3z" fill="#ddd8c6" /><path d="M6 5h12v15H6z" /><path d="M8.500 1.500h7v4h-7zM8 9h8M8 12h8M8 15h6" /></g>,
  undo: <UndoShape c="#bd8774" />,
  redo: <UndoShape c="#98aa98" flip />,
  label: <Tag fill="#d5d3ba" stroke="#999" txt="#555" t="abc" />,
  diagram: <g><circle cx="9" cy="8" r="7" fill="#b9c9bf" stroke="#888" /><path d="M9 8V1A7 7 0 0 0 2 8z" fill="#c99" /><path d="M11 13h3v10h-3zM15 16h3v7h-3zM19 19h3v4h-3z" fill="#bbb" stroke="#888" /></g>,
  labelpin: <g><Tag fill="#b9d9fb" stroke="#4a8de0" txt="#333" t="ab" /><path d="M19 17V8q-1.500-3-3 0" stroke="#888" fill="none" /><circle cx="19" cy="19" r="4.200" fill="#ac2128" stroke="#7d1218" /></g>,
  labelred: <Tag fill="#ffc9c9" stroke="#f01818" txt="#d01010" t="abc" />,
  ypin: <g><Tag fill="#fce94f" stroke="#c4a000" txt="#333" t="ab" /><path d="M19 17V8" stroke="#888" fill="none" /><circle cx="19" cy="19" r="4.200" fill="#ac2128" stroke="#7d1218" /></g>,
  yeye: <g><Tag fill="#fce94f" stroke="#c4a000" txt="#333" t="abc" /><path d="M8 19q7-7 15 0-7 6-15 0z" fill="#fff" stroke="#333" /><circle cx="16" cy="18.700" r="3" fill="#5f8cc0" /><circle cx="16" cy="18.700" r="1.200" fill="#123" /></g>,
  ymove: <g><Tag fill="#fce94f" stroke="#c4a000" txt="#333" t="abc" /><GlyphBadge p={ARROW_R} /></g>,
  yrot: <g><Tag fill="#fce94f" stroke="#c4a000" txt="#333" t="abc" /><GlyphBadge p={ROTATE} /></g>,
  yedit: <g><Tag fill="#fce94f" stroke="#c4a000" txt="#333" t="abc" /><GlyphBadge c="#c4a000" p="M16 21l5-5" /></g>,
  webadd: <g><Globe /><PlusBadge /></g>,
  websearch: <g><Globe /><rect x="14" y="14" width="10" height="10" rx="1.500" fill="#5a8c5a" /><circle cx="18.500" cy="18.300" r="2" fill="none" stroke="#fff" strokeWidth="1.300" /><path d="M20 20l2 2" stroke="#fff" strokeWidth="1.300" /></g>,
  webbin: <g><Globe c="#44658c" bg="#86a9ce" /><path d="M6 4l6 3 6-3M5 9l5 2 4-2 5 1" fill="none" stroke="#33445c" strokeWidth="2" /><path d="M9 13h2.500l.5 1.500.5-1.500H15l5 7h-6l-2-3-2 3H4z" fill="#111" /><circle cx="7" cy="20.500" r="2.600" fill="#fff" stroke="#111" strokeWidth="1.600" /><circle cx="17" cy="20.500" r="2.600" fill="#fff" stroke="#111" strokeWidth="1.600" /></g>,
  python: <g><path d="M11 2c-4 0-4.500 1.500-4.500 3v2.500H12v1H4.500C2 8.500 1.500 11 1.500 13s1 4 3 4H7v-3c0-2 1.500-3 3-3h4.500c1.500 0 2.500-1 2.500-2.500V5c0-2-2-3-6-3z" fill="#3a76a8" /><path d="M12.500 22c4 0 4.500-1.500 4.500-3v-2.500h-5.500v-1H19c2.500 0 3-2.500 3-4.500s-1-3.500-3-3.500h-1.500v2.500c0 2-1 3-3 3H10c-1.500 0-2.500 1-2.500 2.500V19c0 2 1 3 5 3z" fill="#ffd342" /><path d="M17 16.500l4.500 2.500-4.500 2.500" fill="none" stroke="#444" strokeWidth="1.400" /></g>,
  help: <g><path d="M2 1.500h20v21H2z" fill="#6d97c4" stroke="#33445c" /><path d="M2 1.500h5v21H2z" fill="#33445c" /><text x="14.500" y="17.500" fontSize="15" textAnchor="middle" fill="#fff" fontFamily="Liberation Serif, serif">?</text></g>,

  triangle: <g stroke="#888" fill="#ddcfc9"><path d="M1 2v20h20zM5 11v7h8z" fillRule="evenodd" /><path d="M17.500 1H23v21h-5.500z" fill="#dbd7c3" /><path d="M20 4h3M20 8h3M20 12h3M20 16h3" /></g>,
  movept: <g fill="#d8dbd6" stroke="#888"><circle cx="3.500" cy="12" r="2.500" /><circle cx="10" cy="4" r="2.500" /><circle cx="19.500" cy="6" r="2.500" /><GlyphBadge c="#888" p={ARROW_R} /></g>,
  rotf: <g><Blob /><GlyphBadge c="#888" p={ROTATE} /></g>,
  scalef: <g><Blob /><GlyphBadge c="#888" p={SWAP} /></g>,
  simplify: <g fill="#c3cac0" stroke="#888"><circle cx="8" cy="8" r="7" /><path d="M9 15l4-7h7l3.500 7-4 7.500h-7z" /><circle cx="14" cy="14" r="1.500" fill="#fff" /></g>,
  ring: <g><Blob hole /><NewBadge /></g>,
  part: <g><Blob /><path d="M2 20c0-5 9-6 9-4s-9 9-9 4z" fill="#c3cac0" stroke="#888" /><NewBadge /></g>,
  fillring: <g><Blob hole /><NewBadge /></g>,
  delring: <g><Blob hole /><XBadge /></g>,
  delpart: <g><Blob /><path d="M2 20c0-5 9-6 9-4s-9 9-9 4z" fill="#c3cac0" stroke="#888" /><XBadge /></g>,
  reshape: <path d="M1.500 5C3 1 9 2 12 3s8-3 10.500 1-2 8-6 8-4 9-9 10-2-9-4-11-3-3.500-2-6z" fill="#c3cac0" stroke="#888" />,
  offset: <g fill="none" stroke="#888"><path d="M3 14C5 9 9 10 10 5s8-5 11-1 0 8-3 11-7 8-12 6-4-5-3-7z" fill="#dcd6b6" /><path d="M6 15c2-4 5-3 6-7s4-3 6-1 0 5-2 7-5 6-8 5-3-3-2-4z" fill="#c3cac0" /></g>,
  splitv: <g fill="#fff" stroke="#888" strokeWidth="1.300"><path d="M3 3l6 16 6-14h6" fill="none" /><path d="M1.500 1.500H5V5H1.500zM13.500 3H17v3.500h-3.500zM19.500 3H23v3.500h-3.500z" /><GlyphBadge c="#888" p={ROTATE} /></g>,
  mergev: <g fill="none" stroke="#888" strokeWidth="1.500"><path d="M11 1v22M2 11h20M15 11v10" /><path d="M16 2h6v6h-6z" fill="#e3deb9" /><path d="M2 15h6v6H2z" fill="#e5c9c9" /></g>,
  split1: <Scissors />,
  split2: <Scissors />,
  split3: <Scissors />,
  mergef: <g fill="#c3cac0" stroke="#888"><path d="M1 7c0-5 6-6 9-3l2 2 2-2c4-3 9-2 9 3s-5 6-8 3l-3-2-3 2C6 13 1 12 1 7z" /><path d="M12 9q5 4-1 7" fill="none" /><path d="M8 16h3v3H8z" fill="#fff" /></g>,
  mergea: <path d="M2 3h8M2 8h8M2 13h8M2 18h8M14 3h8M14 8h8M14 13h8M14 18h8M12 1v6M12 12v6M8 21h8M9 5l3 3 3-3M9 16l3 3 3-3" stroke="#888" fill="none" strokeWidth="1.300" />,
  rotsym: <g fill="#ddd" stroke="#888"><path d="M12 22H4l6-9zM14 12V3l7 4z" /><path d="M8 17Q-1 11 6 5h6M9 2l4 3-4 3" fill="none" strokeWidth="1.400" /></g>,

  annolayer: <g><text x="8" y="20.500" fontSize="21" fontWeight="700" textAnchor="middle" fill="#a8c6e6" stroke="#33557c" strokeWidth="1" fontFamily="Liberation Serif, serif">A</text><path d="M2 3h8q5 1 5 5 1 3 6 3" fill="none" stroke="#33557c" strokeWidth="1.200" /><path d="M1 1.500h3V5H1z" fill="#6d97c4" /><path d="M19 0l1.300 3H23l-2.200 1.800.8 2.700L19 6l-2.600 1.500.8-2.700L15 3h2.700z" fill="#6d97c4" stroke="#33557c" strokeWidth=".5" /><NewBadge /></g>,
  annosel: <g><path d="M3 3h17v17H3z" fill="none" stroke="#777" strokeDasharray="2 2" /><path d="M1.500 1.500h3v3h-3zM18.500 1.500h3v3h-3zM1.500 18.500h3v3h-3zM18.500 18.500h3v3h-3z" fill="#fff" stroke="#777" /><path d="M6 1l1 17 4-4 4.500 8 3-2-4.500-7.500 5-.5z" fill="#fff" stroke="#222" /></g>,
  annopoly: <g><path d="M4 3h16L15 19H12L3 15z" fill="#f7f9fb" stroke="#222" strokeWidth="1.200" /><g fill="#2d7cf6"><circle cx="4" cy="3" r="2.600" /><circle cx="20" cy="2.500" r="2.600" /><circle cx="3" cy="15" r="2.600" /><circle cx="11" cy="20" r="2.600" /></g><PlusBadge /></g>,
  annoline: <g><path d="M20 4L7 3 4 11l6 9" fill="none" stroke="#222" strokeWidth="1.300" /><g fill="#2d7cf6"><circle cx="20" cy="4" r="2.600" /><circle cx="6.500" cy="2.800" r="2.600" /><circle cx="3.500" cy="11.500" r="2.600" /><circle cx="9.500" cy="20" r="2.600" /></g><PlusBadge /></g>,
  annostar: <g><path d="M11 2l2.800 7H21l-5.700 4.600L17.500 21 11 16.800 4.500 21l2.200-7.400L1 9h7.200z" fill="#fdeca6" stroke="#dc9a4c" /><PlusBadge /></g>,
  annotext: <g><text x="11" y="17" fontSize="16" textAnchor="middle" fill="#222" stroke="#222" strokeWidth=".3" fontFamily="Liberation Serif, serif">T</text><path d="M2 16.500h3v3H2z" fill="#fff" stroke="#777" /><PlusBadge /></g>,
  annocurve: <g><text x="1" y="11" fontSize="9" fontWeight="700" fill="#333" fontFamily="Noto Sans, sans-serif" transform="rotate(-8 8 10)">a b c</text><path d="M2 18q9-11 19-3" fill="none" stroke="#777" strokeDasharray="2 1.500" /><path d="M1.500 16.500h3v3h-3zM10 9.500h3v3h-3zM19 10h3v3h-3z" fill="#fff" stroke="#777" /><PlusBadge /></g>,
  annoform: <g transform="translate(0 -1)"><path d="M1.500 2.500h21v14.500H9l-6 5 1.500-5h-3z" fill="#eaf0f1" stroke="#8b9294" strokeWidth="1.200" /><text x="12" y="15" fontSize="15" textAnchor="middle" fill="#333" stroke="#333" strokeWidth=".3" fontFamily="Liberation Serif, serif">T</text></g>,

  /* panel icons */
  addlayer: <g><path d="M2 2h17v17H2z" fill="#f6f7f5" stroke="#7e8182" strokeWidth="1.500" /><circle cx="19" cy="19" r="4.200" fill="#7cad83" stroke="#4f7f57" /><circle cx="19" cy="19" r="1.700" fill="#fff" /></g>,
  filter: <FilterShape />,
  filterdrop: <g><FilterShape /><path d="M18 20.500h8l-4 4z" fill="#6b6d6f" /></g>,
  collapse: <TreeArrow up />,
  expand: <TreeArrow />,
  info: <Info />,
  dellayer: <g><path d="M2 2h17v17H2z" fill="#f6f7f5" stroke="#7e8182" strokeWidth="1.500" /><rect x="13" y="15" width="11" height="8" rx="2" fill="#e8434b" /><path d="M15 19h7" stroke="#fff" strokeWidth="2" /></g>,
  brush: <Brush />,
  addgroup: <g><GroupShape /><rect x="14" y="14" width="9" height="9" rx="2" fill="#7cad83" stroke="#4f7f57" /><circle cx="18.500" cy="18.500" r="1.600" fill="#fff" /></g>,
  eye: <g><path d="M0 12Q11 1 23 12 12 22 0 12z" fill="#f4f5f6" stroke="#777" /><path d="M0 8.500Q11-3 23 8.500" fill="none" stroke="#999" /><circle cx="12" cy="11.500" r="5" fill="#7ea1c8" stroke="#4c6c8f" /><circle cx="12" cy="11.500" r="2.200" fill="#223" /><path d="M19 20.500h8l-4 4z" fill="#6b6d6f" /></g>,
  epsilon: <g><text x="7" y="14" fontSize="21" textAnchor="middle" fill="#888" fontFamily="Liberation Serif, serif">ε</text><path d="M11 11h12v4h-2v8h-3v-6h-2v6h-3v-8h-2z" fill="#aaa" /></g>,
  tilesdark: <Tiles dark />,
  tiles: <Tiles />,
  wcs: <Globe c="#33445c" bg="#8fb0d4" />,
  wfs: <g><Globe c="#7ea6d2" bg="#f2f6fb" /><path d="M5 6l5.500 12L16 7l5-1" fill="none" stroke="#445" strokeWidth="1.600" /></g>,
  arcgis: <g><Globe c="#7ea6d2" bg="#f2f6fb" /><path d="M12 6l-4 4 1 4 4-1M4 12l4 7M11 19l2-4" fill="none" stroke="#223" strokeWidth="2.600" /></g>,
  group: <GroupShape />,
  dot: <circle cx="12" cy="11.500" r="8.500" fill="#4478b4" stroke="#2c5688" strokeWidth="1.300" />,
  plane: <path d="M12 1.500c1.500 0 1.800 3 1.800 6L23 13.500v2L13.800 13v5l3.200 3v1.500L12 21.500 7 22.500V21l3.200-3v-5L1 15.500v-2l9.200-6c0-3 .3-6 1.800-6z" fill="#111" />,
  vline: <g fill="#fff" stroke="#777"><path d="M1 3l8 19L16 4l6-1" fill="none" strokeWidth="1.400" /><circle cx="16" cy="4" r="1.800" /><circle cx="23" cy="3.500" r="1.500" /></g>,
  vpoly: <path d="M1 6c0-7 7-3 11-3s9-4 11 0 1 11-2 13-5-3-9-3-3 5-8 4S1 10 1 6z" fill="#dedede" stroke="#777" strokeWidth="1.500" />,
  raster: <Checker />,
  pseudo: <g><linearGradient id="ps"><stop offset="0" stopColor="#d7191c" /><stop offset=".5" stopColor="#ffffbf" /><stop offset="1" stopColor="#1a9641" /></linearGradient><path d="M2 2h20v20H2z" fill="url(#ps)" stroke="#544" strokeWidth="2.200" /></g>,
  tabmap: <g><path d="M2 2h20v15H2z" fill="#89aad0" stroke="#e6eaf0" strokeWidth="1.500" /><path d="M10 7l5-2 5 1-2 5-3-2-3 3z" fill="#dbe5f0" /><path d="M1 1h3v17H1z" fill="#f2f2f2" /><path d="M1 20.500h22" stroke="#e6e6e6" strokeWidth="3" /><path d="M1 19.500h22" stroke="#222" strokeWidth="1.500" strokeDasharray="2 1" /></g>,
  tabattr: <g><path d="M2 2h20v20H2z" fill="#f3f6f9" stroke="#9db9d8" /><path d="M2 2h20v5H2z" fill="#8fb4e0" /><path d="M9 4.500h10M4 10h4M4 13h4M4 16h4M4 19h4M11 10h9M11 13h9M11 16h9M11 19h9" stroke="#9db9d8" strokeWidth="1.400" /></g>,
  tabpyr: <g><path d="M0 19L9 5h14l1 14z" fill="#a9abad" /><path d="M5 15l6-10h4l-5 10zM12 18l5-12h5l1 12z" fill="#dadbdc" /><path d="M4 18h14" stroke="#666" /></g>,
  tabsym: <g><path d="M7 1h10v7H7z" fill="#e05a55" /><path d="M9 8h7v4H9zM4 8v8M20 8v8M9 12v6M15 12v5" stroke="#c98618" strokeWidth="3" fill="#e8a33a" /><path d="M0 17h10v7H0z" fill="#fce94f" /><path d="M14 17h10v7H14z" fill="#8fb4e0" /></g>,
  tabhist: <g><path d="M8 1l6 5-4 1c0 3 1 4 3 5-5 1-9-1-8-5l-3-1z" fill="#6faa7c" transform="translate(1 0)" /><path d="M13 10v3c6-1 10 1 10 5 0 3-2 5-6 6 2-3 2-6-4-6v3l-5-5z" fill="#e5762e" /></g>,
  plus: <g><path d="M8.500 1h7v7.500H23v7h-7.500V23h-7v-7.500H1v-7h7.500z" fill="#fff" stroke="#3c7a46" strokeWidth="1.500" /><path d="M12 4v16M4 12h16" stroke="#5fa06b" strokeWidth="2.200" /></g>,
  minus: <g><path d="M0 8h24v8H0z" fill="#fff" stroke="#d93a40" strokeWidth="1.500" /><path d="M3 12h18" stroke="#ee5a5e" strokeWidth="3" /></g>,
  invert: <g fill="#7dba88"><path d="M0 15C0 9 5 5 10 6.500V2l7 6.500-4.500 4C9 10 4 10 0 15z" transform="rotate(-20 9 10)" /><path d="M24 9c0 6-5 10-10 8.500V22l-7-6.500 4.500-4C15 14 20 14 24 9z" transform="rotate(-20 15 14)" /></g>,
  saveas: <g><Floppy /><rect x="13.500" y="14" width="10" height="9.500" rx="1.500" fill="#5a8c5a" /><path d="M16 21l5-5" stroke="#fff" strokeWidth="1.500" /></g>,
  orangeundo: <UndoShape c="#e8813e" />,
  greenredo: <UndoShape c="#78b082" flip />,
};

const Icon = ({ n, s = 24 }: { n: string; s?: number }) => (
  <svg width={s} height={s} viewBox="0 0 24 24">
    {ICONS[n]}
  </svg>
);

const FloatBtn = () => (
  <svg width="11" height="11" viewBox="0 0 11 11">
    <rect x=".6" y=".6" width="9.800" height="9.800" rx="1.500" fill="#f6f6f6" stroke="#66686a" strokeWidth="1.100" />
    <path d="M4.500 2.500h4v4h-4zM2.500 4.500h4v4h-4z" fill="#f6f6f6" stroke="#66686a" />
  </svg>
);
const CloseBtn = () => (
  <svg width="11" height="11" viewBox="0 0 11 11">
    <rect x=".6" y=".6" width="9.800" height="9.800" rx="1.500" fill="#f6f6f6" stroke="#66686a" strokeWidth="1.100" />
    <path d="M2.800 2.800l5.400 5.400M8.200 2.800L2.800 8.200" stroke="#4d4f51" strokeWidth="2" />
  </svg>
);

/* ---------------------------------------------------------------- toolbars */

// "|" grip, "-" separator, "~" disabled, ">" drop-down arrow, "!" pressed
const BAR1 =
  "page folder save layout layoutmgr style | hand! panall zoomin zoomout zoomfull zoomsel zoomlayer zoomnative zoomlast zoomnext~ mapview map3d bookmark bookmarks clock refresh | select~> selectval~> deselect> selectloc> | identify~ abacus~ gear sigma table~> measure> maptips! action~>";
const BAR2 =
  "datasource geopackage shapefile spatialite scratch meshnew virtual | edits~ pencil~ saveedits~ digitize~> addpoint~ vertex~> attrs~ trash~ cut~ copy~ paste~ undo~ redo~ | label~ diagram~ - labelpin labelred - ypin yeye ymove yrot yedit | webadd websearch webbin | python | help |";
const BAR3 =
  "triangle~ movept~> rotf~ scalef~ simplify~ ring~ part~ fillring~ delring~ delpart~ reshape~ offset~ splitv~ mergev~ split1~ split2~ mergef~ mergea~ rotsym~> | annolayer> annosel annopoly annoline annostar annotext annocurve - annoform>";

const ToolbarRow = ({ spec, h }: { spec: string; h: number }) => (
  <Bar $h={h}>
    <Grip $first />
    {spec.split(" ").map((t, i) => {
      if (t === "|") return <Grip key={i} />;
      if (t === "-") return <Sep key={i} />;
      const off = t.includes("~");
      return (
        <React.Fragment key={i}>
          <Tool $on={t.includes("!")} $off={off}>
            <Icon n={t.replace(/[~>!]/g, "")} />
          </Tool>
          {t.includes(">") && (
            <DropSlot $off={off}>
              <Tri />
            </DropSlot>
          )}
        </React.Fragment>
      );
    })}
  </Bar>
);

const MENU: [string, string, string][] = [
  ["Pro", "y", "ecto"], ["", "E", "dición"], ["", "V", "er"], ["", "C", "apa"],
  ["Con", "f", "iguración"], ["Co", "m", "plementos"], ["Vect", "o", "rial"], ["", "R", "áster"],
  ["Base de ", "d", "atos"], ["", "W", "eb"], ["", "M", "alla"], ["Pro", "c", "esos"], ["A", "y", "uda"],
];

/* -------------------------------------------------------------------- maps */

const OverviewMap = () => (
  <svg width="249" height="119" viewBox="207 762 747 356" preserveAspectRatio="none">
    <defs>
      <filter id="ovr" x="-5%" y="-5%" width="110%" height="110%">
        <feTurbulence type="fractalNoise" baseFrequency=".12" numOctaves="2" seed="4" />
        <feDisplacementMap in="SourceGraphic" scale="8" xChannelSelector="R" yChannelSelector="G" />
      </filter>
    </defs>
    <rect x="207" y="762" width="747" height="356" fill="#abd3df" />
    <g fill="#f2efe9" filter="url(#ovr)">
      <path d="M200 800L215 805 250 792 290 797 330 800 400 800 425 805 430 815 408 822 398 838 415 848 425 858 430 838 448 822 455 832 470 838 458 850 470 855 448 860 430 872 414 892 410 880 385 880 370 885 365 898 372 907 385 905 392 897 395 905 387 912 398 922 410 928 428 918 430 924 405 933 385 918 362 908 350 892 335 875 323 860 322 840 305 825 285 816 270 812 245 822 222 829 240 815 225 810 200 806z" />
      <path d="M425 920L455 920 470 935 500 945 508 955 498 975 490 995 475 1005 462 1020 450 1034 438 1040 436 1052 428 1050 425 1035 430 1000 434 980 420 970 411 950 416 935z" />
      <path d="M450 772L490 767 540 768 535 785 525 797 500 807 490 815 478 805 475 790 455 780z" />
      <path d="M330 786L350 778 380 783 412 785 400 796 345 797zM375 771L445 764 440 774 400 780zM425 788L450 792 472 808 462 815 445 802z" />
      <path d="M530 806l15-6 10 5-12 6zM565 838l8-18 8 2 4 16-16 4zM392 893l18 2 15 6-16 0z" />
      <path d="M563 868L565 852 583 850 578 840 600 830 612 826 592 822 596 812 618 796 640 793 655 798 700 793 740 795 750 785 800 779 850 792 900 793 960 800 960 808 922 812 915 826 900 838 892 828 900 814 870 822 848 826 866 842 850 855 850 868 842 870 838 855 825 860 835 880 825 895 805 903 800 910 808 925 800 935 792 928 785 925 798 952 788 942 783 912 772 898 758 893 748 915 742 927 735 912 728 895 700 891 704 900 695 908 675 917 666 910 655 885 652 873 640 872 625 865 620 855 610 860 617 874 605 870 590 857 580 860 570 870z" />
      <path d="M570 872L602 867 605 875 625 880 650 882 660 905 670 920 685 918 680 935 660 952 660 975 645 990 640 1005 620 1012 610 995 603 975 605 950 595 935 580 929 560 928 548 910 550 890zM672 975L684 965 678 992 669 990z" />
      <path d="M817 990L835 978 845 968 858 970 867 976 874 963 885 985 898 1000 893 1018 875 1025 865 1012 845 1008 825 1014zM875 1030l10 0-4 6z" />
      <path d="M778 925l22 25 6 8-10-4zM805 940l20-10-3 18-12 4zM858 942l20 4 20 14-10 0-20-8zM802 958l40 4-4 3-32-3zM828 905l8 8 3 14-6-4zM862 868l10-8 6-15 4 12-14 14zM926 1035l14-14 8 0-16 18z" />
      <path d="M200 1105L300 1105 350 1098 420 1092 448 1076 456 1080 448 1098 490 1110 530 1098 570 1090 650 1085 700 1086 760 1080 850 1082 900 1088 935 1100 960 1104V1125H200z" />
    </g>
    <g fill="#abd3df" filter="url(#ovr)">
      <path d="M630 858L643 848 664 857 655 863 636 863zM680 845L694 843 690 868 680 862zM652 878l4 4 18 26-4 2zM684 888l14 6-2 3-14-6zM606 822l10 6 8-12-6-6z" />
    </g>
  </svg>
);

const NORTH_AMERICA =
  "M10 100L140 100 200 120 280 132 380 137 430 122 425 100 460 80 560 60 640 45 760 35 900 30 1100 27 1300 35 1400 52 1428 72 1400 98 1350 115 1310 150 1250 172 1200 187 1150 208 1110 225 1082 214 1060 196 1030 180 990 165 975 180 988 200 983 222 1000 250 1040 265 1060 292 1080 316 1116 322 1098 338 1072 360 1040 348 990 353 930 378 890 388 870 410 855 440 840 465 850 500 838 512 822 505 806 485 790 478 765 472 735 487 702 488 690 520 696 552 722 550 742 520 770 508 776 540 766 575 790 570 822 568 812 600 818 628 850 622 882 603 910 608 960 612 990 622 1032 640 1072 662 1092 692 1130 712 1180 730 1190 766 1160 800 1160 850 1140 890 1092 920 1060 970 1030 1010 1002 1058 992 1095 1022 1112 965 1140 925 1158 882 1146 856 1112 865 1060 870 1010 885 960 897 900 893 850 850 812 820 766 812 725 830 690 850 664 845 642 810 640 780 615 740 592 690 575 640 560 617 535 600 510 575 482 588 518 568 515 540 470 505 430 488 400 468 360 462 320 420 280 370 240 310 226 280 236 230 260 170 275 100 290 10 292z";
const EURASIA =
  "M-60 215L0 205 60 190 110 165 160 140 130 100 90 70 60 52 200 42 400 38 600 41 800 50 900 62 1000 82 1080 74 1200 62 1300 66 1400 84 1480 102V214L1400 215 1340 235 1330 262 1280 300 1230 336 1180 365 1165 400 1150 422 1100 430 1070 455 1040 490 1000 512 975 530 940 545 905 565 900 620 920 662 970 662 980 700 970 740 990 768 930 768 885 762 850 740 820 700 790 670 770 640 764 600 775 572 757 548 720 546 680 575 665 600 675 655 650 645 630 610 600 570 575 522 545 506 500 503 480 498 500 530 480 560 430 580 380 598 376 612 440 605 435 640 400 680 360 710 345 760 350 830 312 870 300 910 260 952 220 986 190 998 165 980 135 930 120 870 115 832 132 800 125 750 95 710 90 675 50 655 0 668-60 670-110 636-120 600-115 530-95 490-55 470-36 440-10 418-52 400-52 350 0 348-10 335-60 312-92 285-55 260z";
const AUSTRALIA =
  "M1110 752L1150 750 1180 790 1200 840 1250 880 1253 930 1245 980 1218 1010 1214 1050 1190 1057 1165 1022 1110 990 1060 972 1000 980 945 986 935 940 915 900 930 870 980 840 1010 802 1060 772z";
const ANTARCTICA =
  "M0 1265L40 1285 60 1308 230 1316 350 1290 500 1280 660 1270 840 1256 900 1222 980 1202 1040 1190 1030 1240 1060 1280 1120 1295 1260 1298 1330 1285 1400 1266 1480 1262 1590 1262 1720 1250 1840 1232 2000 1250 2090 1225 2270 1215 2440 1230 2640 1240 2770 1268 2920 1288V1400H0z";
const ISLANDS =
  "M380 832L412 800 426 802 420 850 400 910 376 902 370 860z M1050 700L1120 715 1200 735 1262 738 1248 758 1200 770 1130 750 1088 742z M1405 980L1452 1010 1400 1045 1362 1080 1350 1070 1392 1030z";

const TerrainMap = () => (
  <svg width="960" height="455" viewBox="24 21 2880 1365" preserveAspectRatio="none">
    <defs>
      <filter id="b6" x="-20%" y="-20%" width="140%" height="140%"><feGaussianBlur stdDeviation="5" /></filter>
      <filter id="b14" x="-30%" y="-30%" width="160%" height="160%"><feGaussianBlur stdDeviation="15" /></filter>
      <filter id="b36" x="-50%" y="-50%" width="200%" height="200%"><feGaussianBlur stdDeviation="34" /></filter>
      <filter id="coast" x="0" y="0" width="100%" height="100%">
        <feTurbulence type="fractalNoise" baseFrequency=".045" numOctaves="3" seed="7" />
        <feDisplacementMap in="SourceGraphic" scale="16" xChannelSelector="R" yChannelSelector="G" />
      </filter>
      <filter id="ridge" x="-10%" y="-10%" width="120%" height="120%">
        <feTurbulence type="fractalNoise" baseFrequency=".06" numOctaves="3" seed="3" result="n" />
        <feDisplacementMap in="SourceGraphic" in2="n" scale="22" xChannelSelector="R" yChannelSelector="G" />
        <feGaussianBlur stdDeviation="2.600" />
      </filter>
      <filter id="rough" x="-20%" y="-20%" width="140%" height="140%">
        <feTurbulence type="fractalNoise" baseFrequency=".04" numOctaves="4" seed="11" result="n" />
        <feDisplacementMap in="SourceGraphic" in2="n" scale="45" xChannelSelector="R" yChannelSelector="G" />
        <feGaussianBlur stdDeviation="5" />
      </filter>
      <filter id="relief" x="-10%" y="-10%" width="120%" height="120%">
        <feGaussianBlur in="SourceGraphic" stdDeviation="11" result="soft" />
        <feTurbulence type="fractalNoise" baseFrequency=".07" numOctaves="4" seed="15" result="n" />
        <feDisplacementMap in="soft" in2="n" scale="48" xChannelSelector="R" yChannelSelector="G" />
      </filter>
      <filter id="seaNoise" x="0" y="0" width="100%" height="100%">
        <feTurbulence type="fractalNoise" baseFrequency=".005 .009" numOctaves="5" seed="21" />
        <feColorMatrix values="0 0 0 0 .84  0 0 0 0 .93  0 0 0 0 .91  1.500 0 0 0 -.62" />
      </filter>
      <filter id="landNoise" x="0" y="0" width="100%" height="100%">
        <feTurbulence type="fractalNoise" baseFrequency=".012 .018" numOctaves="5" seed="5" />
        <feColorMatrix values="0 0 0 0 .88  0 0 0 0 .78  0 0 0 0 .57  0 1.600 0 0 -.72" />
      </filter>
      <linearGradient id="ant">
        <stop offset="0" stopColor="#f1e9d6" />
        <stop offset=".2" stopColor="#e9dab5" />
        <stop offset=".35" stopColor="#f0e7d2" />
        <stop offset=".5" stopColor="#e4cf9c" />
        <stop offset=".7" stopColor="#ddc285" />
        <stop offset=".9" stopColor="#e2cb95" />
        <stop offset="1" stopColor="#f1e9d6" />
      </linearGradient>
      <g id="landShapes">
        <path d={NORTH_AMERICA} />
        <path d={ANTARCTICA} />
        <g transform="translate(1440 0)">
          <path d={EURASIA} />
          <path d={AUSTRALIA} />
          <path d={ISLANDS} />
        </g>
      </g>
      <clipPath id="landClip">
        <path d={NORTH_AMERICA} />
        <path d={ANTARCTICA} />
        <path d={EURASIA} transform="translate(1440 0)" />
        <path d={AUSTRALIA} transform="translate(1440 0)" />
        <path d={ISLANDS} transform="translate(1440 0)" />
      </clipPath>
    </defs>

    <rect x="24" y="21" width="2880" height="1365" fill="#98d6cc" />
    <g filter="url(#b36)" fill="#7fcfc2">
      <ellipse cx="150" cy="350" rx="170" ry="50" />
      <ellipse cx="300" cy="440" rx="200" ry="50" />
      <ellipse cx="960" cy="480" rx="110" ry="70" />
      <ellipse cx="1190" cy="530" rx="80" ry="80" />
      <ellipse cx="1100" cy="1050" rx="90" ry="50" />
      <ellipse cx="1300" cy="360" rx="70" ry="50" />
      <ellipse cx="1490" cy="800" rx="60" ry="90" />
      <ellipse cx="2700" cy="450" rx="140" ry="100" />
      <ellipse cx="2300" cy="830" rx="110" ry="70" />
      <ellipse cx="2500" cy="1030" rx="120" ry="40" />
      <ellipse cx="1700" cy="1180" rx="240" ry="40" />
      <ellipse cx="2850" cy="740" rx="60" ry="80" />
      <ellipse cx="160" cy="930" rx="110" ry="90" />
      <ellipse cx="1980" cy="990" rx="80" ry="60" />
      <ellipse cx="2820" cy="1160" rx="90" ry="40" />
      <ellipse cx="720" cy="1180" rx="200" ry="35" />
    </g>
    <g filter="url(#b36)" fill="#b6dfd9">
      <ellipse cx="620" cy="880" rx="110" ry="230" />
      <ellipse cx="750" cy="660" rx="110" ry="60" />
      <ellipse cx="300" cy="70" rx="340" ry="55" />
      <ellipse cx="1480" cy="120" rx="90" ry="80" />
      <ellipse cx="2160" cy="590" rx="60" ry="60" />
      <ellipse cx="2350" cy="1090" rx="300" ry="45" />
      <ellipse cx="2650" cy="900" rx="80" ry="90" />
      <ellipse cx="2600" cy="1180" rx="220" ry="40" />
      <ellipse cx="1840" cy="1080" rx="140" ry="50" />
      <ellipse cx="2680" cy="700" rx="120" ry="40" />
      <ellipse cx="2800" cy="40" rx="300" ry="40" />
    </g>
    <rect x="24" y="21" width="2880" height="1365" filter="url(#seaNoise)" opacity=".75" />

    <g fill="none" stroke="#dceeea" strokeLinecap="round" opacity=".55" filter="url(#b14)" strokeWidth="22">
      <path d="M1245 290L1250 340 1200 400 1130 460 1095 530 1108 600 1200 680 1345 712 1378 790 1350 900 1335 1010 1365 1080 1440 1130 1620 1140 1740 1080 1880 970 2010 900" />
      <path d="M625 560L650 690 590 790 570 900 592 985 570 1100 420 1150 200 1180 30 1230" />
      <path d="M1900 600L2000 690 2010 800 2020 900 2090 990 2280 1080 2500 1110 2700 1150 2850 1190" />
      <path d="M1180 270L1260 215 1330 200" />
      <path d="M570 900L720 910 890 890M240 1060L420 1140" strokeWidth="14" />
    </g>
    <g fill="none" stroke="#eef4f0" strokeWidth="4" strokeLinecap="round" opacity=".75" filter="url(#ridge)">
      <path d="M24 470L110 495 215 545" strokeWidth="8" strokeDasharray="18 8" />
      <path d="M24 555L120 535 140 600 210 690 270 790" strokeDasharray="16 7" />
      <path d="M50 425L90 480M70 920L110 1000 180 1060 300 1110" strokeDasharray="14 6" />
      <path d="M270 815L360 850 400 880M250 870L330 920M330 765l25 22" strokeWidth="8" strokeDasharray="12 9" />
      <path d="M400 880L580 912 800 905 850 835M800 905L890 880" strokeDasharray="12 8" />
      <path d="M735 707L820 712M750 690L810 640M1235 390l20 12M1230 450l10 20M1265 570l15 10" strokeWidth="7" />
      <path d="M1160 945l60-8 12 30M1160 830v60" strokeWidth="7" />
      <path d="M960 560L985 620M990 620L975 575" strokeWidth="5" />
      <path d="M1440 970L1490 930 1530 880M1440 1045l30-15M1380 1080l50-70M1330 400l70-40" strokeWidth="6" strokeDasharray="14 9" />
      <g transform="translate(1440 0)">
        <path d="M600 600L610 680 598 760M745 640L735 760 722 940 820 955" strokeWidth="9" />
        <path d="M450 740L480 740 515 790 505 840 470 870M400 770l60-20" strokeWidth="9" />
        <path d="M340 1070L440 1075M350 1125L440 1132M380 930v50" strokeWidth="9" strokeDasharray="20 8" />
        <path d="M1340 265L1375 310 1392 380 1400 440" strokeWidth="8" />
        <path d="M1140 430L1150 510 1190 550 1180 600M1090 480L1110 520 1100 620" strokeWidth="7" />
        <path d="M1190 490L1240 560 1340 590 1400 640 1440 720M1230 650L1350 660M1300 440l70 20" strokeDasharray="6 14" strokeWidth="6" />
        <path d="M640 1020L700 960M800 800l60 5M855 880l60 15M1200 560l100 30M1390 545l60-8" strokeWidth="8" strokeDasharray="10 10" />
      </g>
    </g>
    <g fill="#f1f4f0" filter="url(#rough)" opacity=".85">
      <path d="M120 70L240 70 200 105 140 100zM24 1040L110 1045 24 1060zM24 1090h30v15H24zM120 750l50-15 10 60-30 15zM1300 235l60-10-30 35z" />
      <g transform="translate(1440 0)">
        <path d="M530 1080L580 1075 640 1110 690 1145 640 1135 600 1130zM590 1150L660 1155 710 1195 640 1190zM210 1010l30-10 10 40-30 0z" />
        <path d="M1290 870L1340 930 1365 990 1400 1010 1380 1050 1350 1000 1310 960zM1330 860l50 40 10 70-30-20zM1350 1085L1464 1050V1080L1400 1135 1340 1145zM1180 800l50 20 20 50-40-10zM1260 680l70 10-20 60-50-30zM920 850l40-10-30 40zM1185 1070l40 20-20 5z" />
        <path d="M30 1220l30 0-15 12zM80 1230l70-5-40 15z" />
      </g>
    </g>
    <g fill="none" stroke="#4aa99b" strokeWidth="6" strokeLinecap="round" filter="url(#b6)" opacity=".85">
      <path d="M24 297L110 292 200 270 300 228M82 822L85 850 62 910 34 985" />
      <path d="M895 545L950 545 985 560M1200 1142L1250 1142 1275 1165 1265 1185" />
      <path d="M820 770L850 820 890 860 892 920M700 590L780 620" strokeWidth="5" />
      <g transform="translate(1440 0)">
        <path d="M1180 372L1250 340 1335 262 1390 285 1464 296" />
        <path d="M1160 430L1170 500 1205 540 1200 590 1160 612M1030 590L1045 660M1350 790L1370 850 1395 880" />
        <path d="M1290 1165L1310 1120 1345 1085M780 680L830 740 880 775 980 785" strokeWidth="4" />
      </g>
    </g>

    <g filter="url(#coast)">
      <use href="#landShapes" fill="#d8ece6" stroke="#d8ece6" strokeWidth="30" strokeLinejoin="round" opacity=".55" filter="url(#b14)" />
      <use href="#landShapes" fill="#f6f5f0" stroke="#f6f5f0" strokeWidth="11" strokeLinejoin="round" filter="url(#b6)" />
      <use href="#landShapes" fill="#f2ecde" />
      <path d={ANTARCTICA} fill="url(#ant)" transform="translate(0 10)" filter="url(#b6)" />
      <g clipPath="url(#landClip)">
        <rect x="24" y="21" width="2880" height="1200" filter="url(#landNoise)" opacity=".5" />
        <g filter="url(#relief)" fill="#dfc48c">
          <path d="M900 75L1000 55 1150 42 1270 55 1310 75 1250 115 1230 155 1180 178 1130 200 1105 222 1078 195 1062 150 1000 105z" fill="#e5cf9e" />
          <path d="M1060 75L1230 70 1180 130 1110 170z" fill="#dfc48c" />
          <path d="M230 210L330 180 440 175 480 240 520 290 600 320 630 400 630 450 670 500 700 570 650 560 600 490 560 430 500 410 480 340 440 270 370 220 300 205z" opacity=".72" />
          <path d="M560 320L620 340 630 400 600 430 550 400z" opacity=".5" />
          <path d="M640 510L700 560 760 580 820 625 800 635 740 595 640 560z" opacity=".8" />
          <path d="M850 640L880 610 910 620 875 665 838 710 842 760 872 798 930 815 955 860 945 915 918 935 902 985 885 1110 862 1100 885 980 902 920 900 860 850 812 822 760 826 700z" fill="#d9b676" />
          <path d="M860 800L935 825 945 870 935 915 912 920 900 860z" fill="#cfa65c" />
          <path d="M1050 900L1130 850 1150 800 1140 880 1080 920zM920 655l60 0-30 40z" opacity=".35" />
          <path d="M1250 182L1310 168 1370 180 1340 195 1270 192z" opacity=".8" />
          <path d="M1385 360L1460 360 1450 400 1395 400zM1380 460l80-50 60-10-80 40z" opacity=".6" />
          <g transform="translate(1440 0)">
            <path d="M70 220L140 160 220 145 150 200zM450 120L520 92 570 88 480 125zM80 330L150 320 200 345 120 345z" opacity=".5" />
            <path d="M250 385L340 375 420 400 480 440 500 475 440 465 400 420 300 405zM330 355l60 10 60 35-20 5zM490 450l90-30 20 30-70 30z" opacity=".85" />
            <path d="M565 385L640 360 720 325 700 300 790 260 870 300 900 350 860 390 830 370 750 355 640 375 590 400z" opacity=".7" />
            <path d="M575 385L630 395 680 412 760 385 830 380 865 420 855 470 790 475 750 488 700 484 650 455 595 420z" fill="#d0a75d" />
            <path d="M640 405L740 385 830 395 850 440 740 475 660 450z" fill="#cda153" />
            <path d="M800 480L850 470 900 500 890 600 860 560 810 520z" opacity=".4" />
            <path d="M870 270L1000 230 1140 260 1060 300 920 320 850 360zM1040 150L1150 160 1250 200 1150 190 1040 190zM1250 200l150-30 70-10v30l-120 25z" opacity=".5" />
            <path d="M300 600L340 580 370 610 330 660 300 640zM260 700L330 690 320 800 290 860 300 930 240 960 190 970 160 900 130 810 180 790 260 770z" opacity=".42" />
            <path d="M300 580L345 575 350 640 305 640z" opacity=".5" />
            <path d="M1240 260L1330 230 1300 280 1250 320z" opacity=".6" />
            <path d="M1080 715L1150 735 1220 755 1200 765 1120 745zM1370 1060L1440 1010 1400 1040z" fill="#d9b877" />
            <path d="M960 900l50-30 40 20-40 40zM1235 900l15 50-30 60z" opacity=".35" />
            <path d="M385 840l30-20-10 60-20 10zM330 500l50 80 20 0-60-110zM140 510l30 5 10 30z" opacity=".45" />
          </g>
        </g>
        <path d="M640 385q90-30 180 0-90 25-180 8z" fill="#f0e6cf" transform="translate(1440 0)" filter="url(#b6)" />
      </g>

      <g filter="url(#b6)" fill="#a6dad1" stroke="#f4f4ef" strokeWidth="4">
        <path d="M890 102L935 98 972 115 992 155 975 160 945 130z" fill="#cbe7e1" />
        <path d="M10 222L70 235 122 265 70 285 10 280z" />
        <g transform="translate(1440 0)">
          <path d="M8 410L22 385 60 365 95 352 92 395 50 402zM102 385L122 372 148 388 132 400zM145 395L180 392 202 415 250 422 302 428 300 450 230 446 180 442 155 428z" />
          <path d="M255 360L290 346 340 350 358 366 310 376 265 373z" fill="#bce2dc" />
          <path d="M1054 385L1085 365 1142 348 1135 388 1090 414 1058 412zM1180 330L1230 305 1285 285 1250 325 1185 350z" fill="#a8dbd3" />
          <path d="M1178 262L1240 270 1245 300 1190 312z" fill="#dfefe9" />
          <path d="M905 575L985 525 982 590 925 650 905 645zM975 640L1002 620 1006 640zM975 672L1012 655 1032 682 985 694z" />
          <path d="M1340 240L1390 215 1470 214V288L1400 270z" fill="#a0d8ce" />
          <path d="M295 478L325 500 352 560 372 600 355 590 320 530z" fill="#d9ede7" />
          <path d="M432 360l12 5-6 36-10-10zM485 500l60 6 0 14-48-2z" fill="#e8f2ec" />
          <path d="M768 590L790 595 795 640 780 650z" fill="#b8e0d9" />
        </g>
      </g>
      <g fill="none" stroke="#f3ecdd" strokeWidth="8" strokeLinecap="round" strokeLinejoin="round">
        <path d="M765 520L800 522 850 528M835 515L875 540 915 553 975 562 985 600" strokeWidth="5" />
        <g transform="translate(1440 0)">
          <path d="M990 515L995 560 1012 590 1030 622 1045 690M985 620L950 660M980 690L1010 700 1000 740M1000 770L1060 765" />
          <path d="M1175 710L1235 715 1262 735 1325 785M1345 790L1380 830M1355 255L1410 270 1464 268" strokeWidth="6" />
          <path d="M1180 355L1165 400 1100 440" strokeWidth="12" />
        </g>
        <path d="M1090 1195h35M920 1140L1080 1135 1180 1140" strokeWidth="8" />
        <path d="M24 830q20 60 0 160M50 830l25-5-15 90-25 40" stroke="#f1f3ee" />
      </g>
    </g>
  </svg>
);

/* ------------------------------------------------------------------ panels */

const NAV: { t: string; i: string; d: number; open?: boolean; sel?: boolean }[] = [
  { t: "Vector Tiles", i: "tilesdark", d: 0 },
  { t: "XYZ Tiles", i: "tiles", d: 0, open: true },
  { t: "Argenmap", i: "tiles", d: 1 },
  { t: "Mapzen Global Terrain", i: "tiles", d: 1, sel: true },
  { t: "OpenStreetMap", i: "tiles", d: 1 },
  { t: "WCS", i: "wcs", d: 0 },
  { t: "WFS / OGC API - Features", i: "wfs", d: 0 },
  { t: "Servidores REST ArcGIS", i: "arcgis", d: 0 },
];

type Layer = { t: string; i: string; d: number; e?: TriDir; on?: boolean; k: "on" | "off" | "current" };
const LAYERS_TOP: Layer[] = [
  { t: "Natural Earth", i: "group", d: 0, e: "down", on: true, k: "on" },
  { t: "natural_earth_vector — ne_10m_geography_reg", i: "dot", d: 1, k: "off" },
  { t: "natural_earth_vector — ne_10m_airports", i: "plane", d: 1, k: "off" },
  { t: "natural_earth_vector — ne_10m_roads", i: "vline", d: 1, e: "right", k: "off" },
  { t: "natural_earth_vector — ne_10m_admin_0_count", i: "vpoly", d: 1, e: "right", k: "off" },
  { t: "OpenStreetMap", i: "raster", d: 0, e: "down", k: "off" },
  { t: "Mapzen Global Terrain", i: "raster", d: 0, e: "down", on: true, k: "current" },
];
const LAYERS_BOTTOM: Layer[] = [
  { t: "NE1_HR_LC_SR_W_DR", i: "raster", d: 0, e: "right", k: "off" },
  { t: "OpenStreetMap", i: "raster", d: 0, e: "right", k: "off" },
  { t: "Google Satellite", i: "raster", d: 0, e: "down", k: "off" },
];
const LayerItem = ({ l }: { l: Layer }) => (
  <LayerRow $depth={l.d} $sel={l.k === "current"}>
    <Expander $w={23}>{l.e && <Tri d={l.e} s={0.95} />}</Expander>
    <Check on={l.on} />
    <LayerIcon>
      <Icon n={l.i} s={16} />
    </LayerIcon>
    <LayerName $kind={l.k}>{l.t}</LayerName>
  </LayerRow>
);

const CLASSES: [string, string, string][] = [
  ["-11000", "#018571", "-11000,0000"],
  ["-8400", "#46aa9c", "-8400,0000"],
  ["-5800", "#87d0c4", "-5800,0000"],
  ["-3200", "#c3e4de", "-3200,0000"],
  ["-600", "#f2f1ec", "-600,0000"],
  ["2000", "#e7d6ab", "2000,0000"],
  ["4600", "#d7b472", "4600,0000"],
];

const TitleRow = ({ t, h, left }: { t: string; h: number; left?: number }) => (
  <DockTitle $h={h} $left={left}>
    {t}
    <Grow />
    <FloatBtn />
    <CloseBtn />
  </DockTitle>
);

const Spin = ({ v, w, h, off, small, pad = 1 }: { v: string; w?: number; h: number; off?: boolean; small?: boolean; pad?: number }) => (
  <Field $w={w} $h={h} $off={off} $small={small} $flat>
    <FieldText $pad={pad}>{v}</FieldText>
    <SpinBtns $off={off}>
      <Tri d="up" s={0.85} />
      <Tri s={0.85} />
    </SpinBtns>
  </Field>
);

const Combo = ({ v, w, icon }: { v: string; w?: number; icon?: string }) => (
  <Field $w={w}>
    {icon && <FieldIcon><Icon n={icon} s={15} /></FieldIcon>}
    <FieldText $pad={icon ? 3 : 1}>{v}</FieldText>
    <ArrowPad>
      <Tri />
    </ArrowPad>
  </Field>
);

const LeftDock = () => (
  <Dock>
    <TitleRow t="Navegador" h={21} />
    <DockTools $h={30}>
      {["addlayer", "refresh", "filter", "collapse", "info"].map((n) => (
        <MiniTool key={n}><Icon n={n} s={15} /></MiniTool>
      ))}
    </DockTools>
    <TreeBox $h={165}>
      <TreeList>
        {NAV.map((r) => (
          <NavRow key={r.t} $depth={r.d} $sel={r.sel}>
            <Expander $w={17}>{r.open && <Tri s={0.95} />}</Expander>
            <NavIcon><Icon n={r.i} s={r.i.startsWith("t") ? 15 : 16} /></NavIcon>
            {r.t}
          </NavRow>
        ))}
      </TreeList>
      <ScrollV>
        <ScrollBtn $side="t"><Tri d="up" s={0.9} /></ScrollBtn>
        <Slider $len={86} $bg="#f1f1f2" />
        <Grow $white />
        <ScrollBtn $side="b"><Tri s={0.9} /></ScrollBtn>
      </ScrollV>
    </TreeBox>
    <Splitter $h />
    <TitleRow t="Vista general" h={20} />
    <Overview>
      <ExtentBox><OverviewMap /></ExtentBox>
    </Overview>
    <Splitter $h />
    <TitleRow t="Capas" h={21} />
    <DockTools $h={30}>
      <MiniTool $on $w={24}><Icon n="brush" s={16} /></MiniTool>
      <MiniTool $w={26}><Icon n="addgroup" s={15} /></MiniTool>
      <MiniTool><Icon n="eye" s={16} /></MiniTool>
      <MiniTool><Icon n="filterdrop" s={16} /></MiniTool>
      <MiniTool $off><Icon n="epsilon" s={16} /></MiniTool>
      <MiniTool $w={12} $off><Tri s={0.95} /></MiniTool>
      <MiniTool><Icon n="expand" s={15} /></MiniTool>
      <MiniTool><Icon n="collapse" s={15} /></MiniTool>
      <MiniTool $w={24}><Icon n="dellayer" s={16} /></MiniTool>
    </DockTools>
    <TreeBox $h={407}>
      <Column>
        <TreeList>
          {LAYERS_TOP.map((l) => <LayerItem key={l.t} l={l} />)}
          <BandLabel>Banda 1</BandLabel>
          <Legend>
            <LegendRamp />
            <LegendText><span>9.000</span><span>-11.000</span></LegendText>
          </Legend>
          {LAYERS_BOTTOM.map((l) => <LayerItem key={l.t} l={l} />)}
        </TreeList>
        <ScrollH>
          <ScrollBtn $side="l"><Tri d="left" s={0.9} /></ScrollBtn>
          <Slider $h $len={292} />
          <Grow />
          <ScrollBtn $side="r"><Tri d="right" s={0.9} /></ScrollBtn>
        </ScrollH>
      </Column>
    </TreeBox>
  </Dock>
);

const RightDock = () => (
  <Dock>
    <TitleRow t="Estilo de capas" h={21} left={2} />
    <StyleHead><Combo v="Mapzen Global Terrain" icon="raster" /></StyleHead>
    <StyleBody>
      <TabColumn>
        <ActiveTab><Icon n="brush" s={22} /></ActiveTab>
        <DarkTabs>
          {["tabmap", "tabattr", "tabpyr", "tabsym", "tabhist"].map((n) => (
            <DarkTab key={n}><Icon n={n} s={21} /></DarkTab>
          ))}
        </DarkTabs>
      </TabColumn>
      <StyleContent>
        <ScrollArea>
          <FormColumn>
            <FormRow $mt={0} $h={26} $pad={0}><Combo v="Pseudocolor monobanda" icon="pseudo" /></FormRow>
            <FormRow $mt={9} $h={26}><Label $w={99}>Banda</Label><Combo v="Banda 1" /></FormRow>
            <FormRow $mt={6} $h={26}>
              <Label $w={99}>Mín</Label>
              <Field $w={125} $flat><FieldText>-11000</FieldText></Field>
              <Label $w={99} $ml={6}>Máx</Label>
              <Field $w={125} $flat><FieldText>9000</FieldText></Field>
            </FormRow>
            <FormRow $mt={3} $h={27}>
              <Label $ml={5}><Tri d="right" s={1.500} c="#2b2b2b" /></Label>
              <Bold $ml={9}>Configuración de valores mín/máx</Bold>
            </FormRow>
            <FormRow $mt={0} $h={26}><Label $w={159}>Interpolación</Label><Combo v="Lineal" /></FormRow>
            <FormRow $mt={6} $h={28}>
              <Label $w={159}>Rampa de color</Label>
              <Field $h={28}><RampBar /></Field>
              <PushButton $w={12} $h={28}><Tri s={0.95} /></PushButton>
            </FormRow>
            <FormRow $mt={6} $h={26}><Label $w={159}>Sufijo unidad de etiqueta</Label><Field $flat /></FormRow>
            <FormRow $mt={7} $h={25}>
              <Label $w={159}>Precisión de etiqueta</Label>
              <Field $h={25} $flat>
                <FieldText $pad={1}>4</FieldText>
                <svg width="14" height="11" viewBox="0 0 14 11">
                  <path d="M4.500 .5H13.500V10.500H4.500L.5 5.500z" fill="#9b9d9f" />
                  <path d="M6 2.800l5 5.400M11 2.800L6 8.200" stroke="#fff" strokeWidth="1.300" />
                </svg>
                <ArrowPad $w={10} />
                <SpinBtns><Tri d="up" s={0.85} /><Tri s={0.85} /></SpinBtns>
              </Field>
            </FormRow>
            <ClassTable>
              <Column>
                <TableHead>
                  <HeadCell>Valor</HeadCell>
                  <HeadCell>Color</HeadCell>
                  <HeadCell $last>Etiqueta</HeadCell>
                </TableHead>
                {CLASSES.map(([v, c, l]) => (
                  <ClassRow key={v}>
                    <ClassValue>{v}</ClassValue>
                    <Swatch $c={c} />
                    <ClassLabel>{l}</ClassLabel>
                  </ClassRow>
                ))}
              </Column>
              <ScrollV>
                <ScrollBtn $side="t"><Tri d="up" s={0.9} /></ScrollBtn>
                <Slider $len={147} />
                <Grow />
                <ScrollBtn $side="b"><Tri s={0.9} /></ScrollBtn>
              </ScrollV>
              <Pointer>
                <svg width="15" height="22" viewBox="0 0 15 22">
                  <path d="M1.500 1L13.500 13 8.500 13.500 10.500 18.500 7 20 4.500 15.500 1.500 18z" fill="#4c4c4c" stroke="#fff" strokeWidth="1.200" />
                </svg>
              </Pointer>
            </ClassTable>
            <FormRow $mt={6} $h={26}>
              <Label $w={42}>Modo</Label>
              <Combo v="Continuo" w={116} />
              <Grow />
              <Label $w={45}>Clases</Label>
              <Spin v="5" w={71} h={25} off />
            </FormRow>
            <FormRow $mt={8} $h={26}>
              <PushButton $w={80}>Clasificar</PushButton>
              {["plus", "minus", "invert", "folder", "saveas"].map((n) => (
                <PushButton key={n} $w={28} $h={24} $ml={6}><Icon n={n} s={15} /></PushButton>
              ))}
              <Grow />
              <PushButton $w={178}>Configuración de Leyenda...</PushButton>
            </FormRow>
            <FormRow $mt={11} $h={15}><Check /><Label $ml={5}>Corte fuera de valores del intervalo</Label></FormRow>
            <FormRow $mt={14} $h={21} $pad={2}><Bold>Representación de capas</Bold></FormRow>
            <FormRow $mt={0} $h={1} />
            <Group>
              <FormRow $mt={0} $h={26} $pad={0}><Label $w={106}>Modo de mezcla</Label><Combo v="Normal" /></FormRow>
              {["Brillo", "Saturación"].map((t, i) => (
                <FormRow key={t} $mt={i ? 8 : 7} $h={24} $pad={0}>
                  <Label $w={107}>{t}</Label>
                  <Track><TrackFill /><Knob /></Track>
                  <Grow />
                  <Spin v="0" w={89} h={24} />
                </FormRow>
              ))}
            </Group>
          </FormColumn>
          <ScrollV>
            <ScrollBtn $side="t"><Tri d="up" s={0.9} /></ScrollBtn>
            <Slider $len={462} />
            <Grow />
            <ScrollBtn $side="b"><Tri s={0.9} /></ScrollBtn>
          </ScrollV>
        </ScrollArea>
        <ApplyRow>
          <PushButton $w={24} $h={23}><Icon n="orangeundo" s={14} /></PushButton>
          <PushButton $w={24} $h={23} $ml={6}><Icon n="greenredo" s={14} /></PushButton>
          <Grow />
          <Check on />
          <Label $ml={5} $w={139}>Actualización en vivo</Label>
          <PushButton $w={80}>
            <svg width="13" height="11" viewBox="0 0 13 11"><path d="M.7 6l3.600 3.600L12.300 1" fill="none" stroke="#333" strokeWidth="1.200" /></svg>
            <span><u>A</u>plicar</span>
          </PushButton>
        </ApplyRow>
      </StyleContent>
    </StyleBody>
  </Dock>
);

export default function App() {
  return (
    <>
      <GlobalStyle />
      <Window>
        <TitleBar>
          <TitleSide>
            <svg width="20" height="20" viewBox="0 0 20 20">
              <circle cx="9.500" cy="9.500" r="7.300" fill="none" stroke="#6fa52b" strokeWidth="4.200" />
              <path d="M14.500 12.500l5 4.500v2.500h-4l-5-5z" fill="#8fbc2e" />
              <path d="M9 9h3l4 5-2 2-5-4z" fill="#f08a1d" />
              <circle cx="10" cy="10" r="2" fill="#fbb040" />
            </svg>
            <svg width="11" height="13" viewBox="0 0 11 13">
              <path d="M.7 6l4.800-4.800L10.300 6M.7 11.500l4.800-4.800 4.800 4.800" fill="none" stroke="#333" strokeWidth="1.300" />
            </svg>
          </TitleSide>
          <TitleText>*proyecto 1 — QGIS [manual]</TitleText>
          <TitleSide $end>
            <svg width="62" height="13" viewBox="0 0 62 13">
              <path d="M1 3.500l5.500 5.500L12 3.500M30 1.500l5 5-5 5-5-5zM49.500 2l9 9M58.500 2l-9 9" fill="none" stroke="#333" strokeWidth="1.200" />
            </svg>
          </TitleSide>
        </TitleBar>
        <MenuBar>
          {MENU.map(([a, b, c]) => (
            <MenuItem key={a + b + c}>{a}<u>{b}</u>{c}</MenuItem>
          ))}
        </MenuBar>
        <ToolbarRow spec={BAR1} h={39} />
        <ToolbarRow spec={BAR2} h={39} />
        <ToolbarRow spec={BAR3} h={39} />
        <Main>
          <LeftDock />
          <Splitter />
          <Canvas><TerrainMap /></Canvas>
          <Splitter />
          <RightDock />
        </Main>
        <StatusBar>
          <Field $flat $h={26}>
            <svg width="20" height="14" viewBox="0 0 20 14">
              <circle cx="9" cy="5.500" r="4.500" fill="none" stroke="#777" strokeWidth="1.200" />
              <path d="M12.200 8.800l4.300 4.300" stroke="#777" strokeWidth="1.400" />
            </svg>
            <Muted>Escriba para localizar (Ctrl+K)</Muted>
          </Field>
          <div />
          <StatusLabel>Coordenada</StatusLabel>
          <Field $w={84} $h={24} $flat $small><FieldText $center>{"-23,8°  21,4°"}</FieldText></Field>
          <StatusIcon $pr={9}>
            <svg width="16" height="16" viewBox="0 0 16 16">
              <path d="M2 1.500l4-1 4 7-3 3z" fill="#fff" stroke="#222" />
              <path d="M1.500 5l7 4M2.500 2.500l7 5M5 1.500l5 5.500" stroke="#222" strokeWidth="1.500" />
              <circle cx="9.500" cy="11.500" r="3.500" fill="#fff" stroke="#222" strokeWidth="1.200" />
              <path d="M8 10l3 3" stroke="#222" />
              <path d="M10 6q2-4 5-4M12 8l3-2M0 8l6 4" stroke="#222" fill="none" />
            </svg>
          </StatusIcon>
          <StatusLabel>Escala</StatusLabel>
          <Field $w={88} $h={25} $flat $small>
            <FieldText>:156941248</FieldText>
            <ScaleSep><Tri /></ScaleSep>
          </Field>
          <StatusIcon>
            <svg width="12" height="15" viewBox="0 0 12 15">
              <path d="M2.800 7V4.500a3.200 3.200 0 0 1 6.400 0V7" fill="none" stroke="#76797b" strokeWidth="1.800" />
              <rect x="0" y="6.500" width="12" height="8.500" rx="1" fill="#5d5f61" />
            </svg>
          </StatusIcon>
          <StatusLabel>Amplificador</StatusLabel>
          <Spin v="100%" w={89} h={25} small />
          <StatusLabel $pl={9}>Rotación</StatusLabel>
          <Spin v="0,0 °" w={90} h={24} small />
          <StatusLabel $pl={6}><Check on />Representar</StatusLabel>
          <StatusLabel $pl={1} $tight>
            <svg width="15" height="15" viewBox="0 0 24 24"><Globe c="#555" bg="#b5b7b9" /></svg>
            EPSG:4326
          </StatusLabel>
          <StatusIcon $pr={4}>
            <svg width="17" height="16" viewBox="0 0 17 16">
              <path d="M8.500 0.500c5 0 8 2.700 8 6 0 2-1 3.500-2.500 4.500l1.500 4.500-4.500-3.200c-6 .9-10.500-1.800-10.500-5.800 0-3.300 3-6 8-6z" fill="#5d5f61" />
            </svg>
          </StatusIcon>
        </StatusBar>
      </Window>
    </>
  );
}
